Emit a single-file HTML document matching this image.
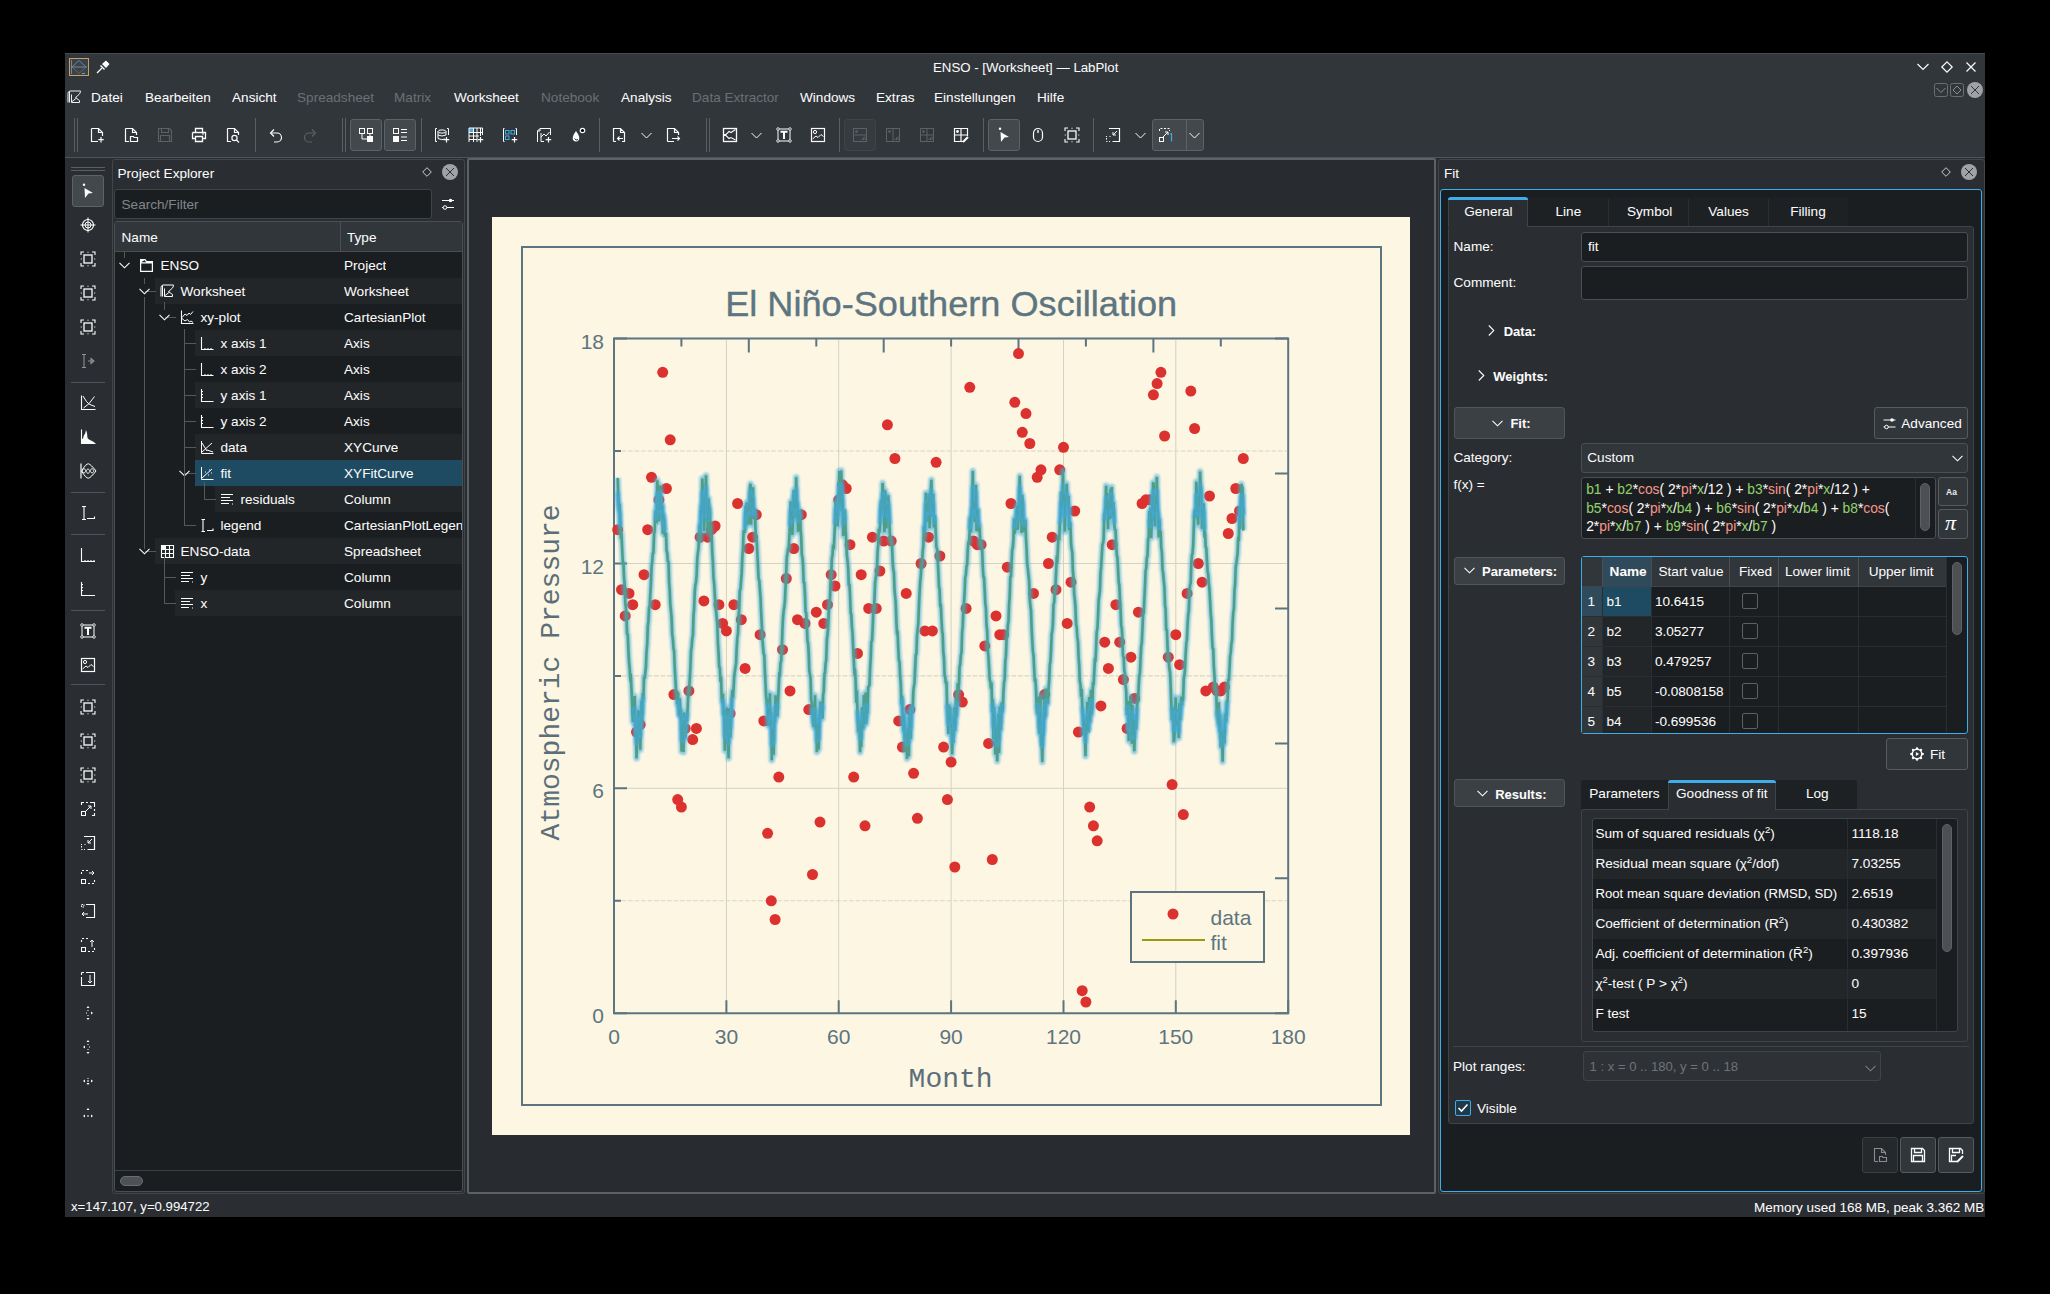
<!DOCTYPE html><html><head><meta charset="utf-8"><style>
html,body{margin:0;padding:0}
body{width:2050px;height:1294px;background:#000;overflow:hidden;position:relative;font-family:"Liberation Sans",sans-serif;color:#fcfcfc}
.a{position:absolute}
.t{position:absolute;white-space:nowrap;line-height:1;-webkit-text-stroke:0.04px currentColor}
svg.a{overflow:visible}
sup{font-size:9.5px;vertical-align:0;position:relative;top:-5px;line-height:0}
</style></head><body>
<div class="a" style="left:65px;top:53px;width:1920px;height:1164px;background:#2a2e32;border-radius:0px;"></div>
<div class="a" style="left:65px;top:53px;width:1920px;height:104px;background:#31363b;border-radius:0px;"></div>
<div class="a" style="left:65px;top:53px;width:1920px;height:1px;background:#464c52;border-radius:0px;"></div>
<div class="t" style="left:933.0px;top:60.8px;font-size:13.25px;color:#fcfcfc;font-weight:normal;font-family:'Liberation Sans',sans-serif;">ENSO - [Worksheet] — LabPlot</div>
<svg class="a" style="left:69px;top:58px;" width="20" height="18" viewBox="0 0 20 18"><rect x="0.5" y="0.5" width="19" height="17" fill="#3b4249" stroke="#c9a063" stroke-width="1"/><path d="M2.5 2 V16 M2 9 H18" stroke="#9aa0a6" stroke-width="0.7" fill="none"/><path d="M3 9 L10 2.5 L17 9" stroke="#5fa0c8" stroke-width="0.8" fill="none"/><path d="M3 9 L10 15.5 L17 9" stroke="#6d737a" stroke-width="0.7" fill="none"/><path d="M13 15.5 H16" stroke="#3daee9" stroke-width="1"/></svg>
<svg class="a" style="left:96px;top:60px;" width="14" height="14" viewBox="0 0 14 14"><path d="M1 13 L6 8" stroke="#fff" stroke-width="1.3"/><path d="M5 5 L9 9 L8 10 L4 6 Z M6 4 L10 0.5 L13.5 4 L10 8 Z" fill="#fff"/></svg>
<svg class="a" style="left:1917px;top:63px;" width="12" height="8" viewBox="0 0 12 8"><path d="M0.5 1 L6 6.5 L11.5 1" stroke="#fcfcfc" stroke-width="1.2" fill="none"/></svg>
<svg class="a" style="left:1941px;top:61px;" width="12" height="12" viewBox="0 0 12 12"><path d="M6 0.8 L11.2 6 L6 11.2 L0.8 6 Z" stroke="#fcfcfc" stroke-width="1.2" fill="none"/></svg>
<svg class="a" style="left:1966px;top:62px;" width="10" height="10" viewBox="0 0 10 10"><path d="M0.5 0.5 L9.5 9.5 M9.5 0.5 L0.5 9.5" stroke="#fcfcfc" stroke-width="1.2" fill="none"/></svg>
<svg class="a" style="left:1934px;top:83px;" width="14" height="14" viewBox="0 0 14 14"><rect x="0.5" y="0.5" width="13" height="13" rx="2" fill="none" stroke="#6a6f74"/><path d="M2.5 5 L7 9.5 L11.5 5" stroke="#8a8f94" fill="none"/></svg>
<svg class="a" style="left:1950px;top:83px;" width="14" height="14" viewBox="0 0 14 14"><rect x="0.5" y="0.5" width="13" height="13" rx="2" fill="none" stroke="#6a6f74"/><path d="M7 3 L11 7 L7 11 L3 7 Z" stroke="#8a8f94" fill="none"/></svg>
<svg class="a" style="left:1967px;top:82px;" width="16" height="16" viewBox="0 0 16 16"><circle cx="8" cy="8" r="8" fill="#a0a2a5"/><path d="M4 4 L12 12 M12 4 L4 12" stroke="#31363b" stroke-width="1"/></svg>
<div class="t" style="left:91.0px;top:90.5px;font-size:13.6px;color:#fcfcfc;font-weight:normal;font-family:'Liberation Sans',sans-serif;">Datei</div>
<div class="t" style="left:145.0px;top:90.5px;font-size:13.6px;color:#fcfcfc;font-weight:normal;font-family:'Liberation Sans',sans-serif;">Bearbeiten</div>
<div class="t" style="left:232.0px;top:90.5px;font-size:13.6px;color:#fcfcfc;font-weight:normal;font-family:'Liberation Sans',sans-serif;">Ansicht</div>
<div class="t" style="left:297.0px;top:90.5px;font-size:13.6px;color:#6b6f73;font-weight:normal;font-family:'Liberation Sans',sans-serif;">Spreadsheet</div>
<div class="t" style="left:394.0px;top:90.5px;font-size:13.6px;color:#6b6f73;font-weight:normal;font-family:'Liberation Sans',sans-serif;">Matrix</div>
<div class="t" style="left:454.0px;top:90.5px;font-size:13.6px;color:#fcfcfc;font-weight:normal;font-family:'Liberation Sans',sans-serif;">Worksheet</div>
<div class="t" style="left:541.0px;top:90.5px;font-size:13.6px;color:#6b6f73;font-weight:normal;font-family:'Liberation Sans',sans-serif;">Notebook</div>
<div class="t" style="left:621.0px;top:90.5px;font-size:13.6px;color:#fcfcfc;font-weight:normal;font-family:'Liberation Sans',sans-serif;">Analysis</div>
<div class="t" style="left:692.0px;top:90.5px;font-size:13.6px;color:#6b6f73;font-weight:normal;font-family:'Liberation Sans',sans-serif;">Data Extractor</div>
<div class="t" style="left:800.0px;top:90.5px;font-size:13.6px;color:#fcfcfc;font-weight:normal;font-family:'Liberation Sans',sans-serif;">Windows</div>
<div class="t" style="left:876.0px;top:90.5px;font-size:13.6px;color:#fcfcfc;font-weight:normal;font-family:'Liberation Sans',sans-serif;">Extras</div>
<div class="t" style="left:934.0px;top:90.5px;font-size:13.6px;color:#fcfcfc;font-weight:normal;font-family:'Liberation Sans',sans-serif;">Einstellungen</div>
<div class="t" style="left:1037.0px;top:90.5px;font-size:13.6px;color:#fcfcfc;font-weight:normal;font-family:'Liberation Sans',sans-serif;">Hilfe</div>
<svg class="a" style="left:67px;top:89px;" width="15" height="15" viewBox="0 0 15 15"><path d="M1 13.5 V4.5 Q1 2.5 3 2 H13.5 Q13.5 4 12 5.5 L8.5 8.5 L12.5 11.5 V13.5 H4.5 V5.5 M4.5 13 L9.5 9 M2.5 2.5 V13.5" fill="none" stroke="#eee" stroke-width="1"/></svg>
<div class="a" style="left:74px;top:118px;width:1px;height:34px;background:#5a5f64;border-radius:0px;"></div>
<div class="a" style="left:77px;top:118px;width:1px;height:34px;background:#5a5f64;border-radius:0px;"></div>
<svg class="a" style="left:89px;top:127px;" width="16" height="16" viewBox="0 0 16 16"><path d="M2.5 1.5 H9.5 L13.5 5.5 V9 M9.5 1.5 V5.5 H13.5 M2.5 1.5 V14.5 H9" fill="none" stroke="#fcfcfc" stroke-width="1.2"/><path d="M12 10 V15.5 M9.3 12.7 H14.7" stroke="#fcfcfc" stroke-width="1.2"/></svg>
<svg class="a" style="left:123px;top:127px;" width="16" height="16" viewBox="0 0 16 16"><path d="M2.5 1.5 H9.5 L13.5 5.5 V8 M9.5 1.5 V5.5 H13.5 M2.5 1.5 V14.5 H6" fill="none" stroke="#fcfcfc" stroke-width="1.2"/><path d="M7.5 9.5 H10.5 L11 10.5 H14.5 V14.5 H7.5 Z" fill="none" stroke="#fcfcfc" stroke-width="1.2"/></svg>
<svg class="a" style="left:157px;top:127px;" width="16" height="16" viewBox="0 0 16 16"><path d="M1.5 1.5 H12.5 L14.5 3.5 V14.5 H1.5 Z M4.5 1.5 V5.5 H11.5 V1.5 M3.5 14.5 V8.5 H12.5 V14.5" fill="none" stroke="#5d6166" stroke-width="1.1"/></svg>
<svg class="a" style="left:191px;top:127px;" width="16" height="16" viewBox="0 0 16 16"><path d="M4.5 5 V1.5 H11.5 V5 M1.5 5.5 H14.5 V11.5 H11.5 M4.5 11.5 H1.5 V5.5 M4.5 9.5 H11.5 V14.5 H4.5 Z" fill="none" stroke="#fcfcfc" stroke-width="1.3"/><path d="M11 7 H13" stroke="#fcfcfc"/></svg>
<svg class="a" style="left:225px;top:127px;" width="16" height="16" viewBox="0 0 16 16"><path d="M2.5 1.5 H9.5 L13.5 5.5 V8 M9.5 1.5 V5.5 H13.5 M2.5 1.5 V14.5 H6" fill="none" stroke="#fcfcfc" stroke-width="1.2"/><circle cx="9.5" cy="11" r="2.6" fill="none" stroke="#fcfcfc" stroke-width="1.2"/><path d="M11.5 13 L14 15.5" stroke="#fcfcfc" stroke-width="1.3"/></svg>
<div class="a" style="left:255px;top:118px;width:1px;height:34px;background:#5a5f64;border-radius:0px;"></div>
<svg class="a" style="left:268px;top:127px;" width="16" height="16" viewBox="0 0 16 16"><path d="M3 6 H9 A4.5 4.5 0 0 1 9 15 H6" fill="none" stroke="#fcfcfc" stroke-width="1.2"/><path d="M6 2.5 L2.5 6 L6 9.5" fill="none" stroke="#fcfcfc" stroke-width="1.2"/></svg>
<svg class="a" style="left:302px;top:127px;" width="16" height="16" viewBox="0 0 16 16"><path d="M13 6 H7 A4.5 4.5 0 0 0 7 15 H10" fill="none" stroke="#5d6166" stroke-width="1.2"/><path d="M10 2.5 L13.5 6 L10 9.5" fill="none" stroke="#5d6166" stroke-width="1.2"/></svg>
<div class="a" style="left:342px;top:118px;width:1px;height:34px;background:#5a5f64;border-radius:0px;"></div>
<div class="a" style="left:345px;top:118px;width:1px;height:34px;background:#5a5f64;border-radius:0px;"></div>
<div class="a" style="left:350px;top:119px;width:32px;height:32px;background:#43484d;border:1px solid #5d6267;box-sizing:border-box;border-radius:3px;"></div>
<div class="a" style="left:384px;top:119px;width:32px;height:32px;background:#43484d;border:1px solid #5d6267;box-sizing:border-box;border-radius:3px;"></div>
<svg class="a" style="left:358px;top:127px;" width="16" height="16" viewBox="0 0 16 16"><rect x="1.5" y="1.5" width="5" height="5" fill="none" stroke="#fcfcfc"/><rect x="9.5" y="1.5" width="5" height="5" fill="none" stroke="#fcfcfc"/><rect x="9" y="9" width="6" height="6" fill="#fcfcfc"/><path d="M4 6.5 V12 H9 M12 6.5 V9" fill="none" stroke="#fcfcfc"/></svg>
<svg class="a" style="left:392px;top:127px;" width="16" height="16" viewBox="0 0 16 16"><rect x="1.5" y="1.5" width="5" height="5" fill="none" stroke="#fcfcfc"/><rect x="1" y="9" width="6" height="6" fill="#fcfcfc"/><path d="M9 2.5 H15 M9 5.5 H15 M9 10 H15 M9 13.5 H15" stroke="#fcfcfc"/></svg>
<div class="a" style="left:421px;top:118px;width:1px;height:34px;background:#5a5f64;border-radius:0px;"></div>
<svg class="a" style="left:434px;top:127px;" width="16" height="16" viewBox="0 0 16 16"><path d="M3 1.5 H1.5 V14.5 H3 M13 1.5 H14.5 V8" fill="none" stroke="#fcfcfc"/><ellipse cx="8" cy="4.5" rx="4" ry="1.6" fill="none" stroke="#fcfcfc"/><path d="M4 4.5 V11.5 Q8 13.5 11 12 M12 4.5 V8 M4 8 Q8 10 12 8" fill="none" stroke="#fcfcfc"/><path d="M12.5 10 V15.5 M9.7 12.7 H15.2" stroke="#fcfcfc" stroke-width="1.2"/></svg>
<svg class="a" style="left:468px;top:127px;" width="16" height="16" viewBox="0 0 16 16"><rect x="1" y="1" width="4" height="4" fill="#3daee9"/><path d="M1 5.5 H14.5 M1 9 H11 M1 12.5 H9 M5.5 1 V15 M9 1 V15 M12.5 1 V9 M1 1 H14.5 V8 M1 1 V15" fill="none" stroke="#fcfcfc"/><path d="M12.5 10 V15.5 M9.7 12.7 H15.2" stroke="#fcfcfc" stroke-width="1.2"/></svg>
<svg class="a" style="left:502px;top:127px;" width="16" height="16" viewBox="0 0 16 16"><path d="M2.5 1.5 H1.5 V14.5 H2.5 M13.5 1.5 H14.5 V8" fill="none" stroke="#fcfcfc"/><rect x="3.5" y="3.5" width="3.5" height="3.5" fill="none" stroke="#3daee9"/><rect x="9" y="3.5" width="3.5" height="3.5" fill="none" stroke="#3daee9"/><rect x="3.5" y="9" width="3.5" height="3.5" fill="none" stroke="#3daee9"/><path d="M12.5 10 V15.5 M9.7 12.7 H15.2" stroke="#fcfcfc" stroke-width="1.2"/></svg>
<svg class="a" style="left:536px;top:127px;" width="16" height="16" viewBox="0 0 16 16"><path d="M1.5 15 V4 L4 1.5 H14.5 V8 M4 1.5 V4 H1.5" fill="none" stroke="#fcfcfc"/><path d="M5 6 V14.5 H8 M5 10 L8 7 L10 9 L13.5 5" fill="none" stroke="#fcfcfc"/><path d="M12.5 10 V15.5 M9.7 12.7 H15.2" stroke="#fcfcfc" stroke-width="1.2"/></svg>
<svg class="a" style="left:570px;top:127px;" width="16" height="16" viewBox="0 0 16 16"><path d="M6 4 Q1.5 10 3 13 Q6 16 9 13 Q10.5 10 6 4 Z" fill="#fcfcfc"/><path d="M4.5 11.5 Q6 14 8 12.5" stroke="#31363b" fill="none"/><circle cx="12.5" cy="3.5" r="2.8" fill="#fcfcfc"/><circle cx="12.5" cy="3.5" r="1.6" fill="#000"/></svg>
<div class="a" style="left:599px;top:118px;width:1px;height:34px;background:#5a5f64;border-radius:0px;"></div>
<svg class="a" style="left:611px;top:127px;" width="16" height="16" viewBox="0 0 16 16"><path d="M2.5 14.5 V1.5 H9.5 L13.5 5.5 V14.5 H11 M9.5 1.5 V5.5 H13.5 M2.5 14.5 H5" fill="none" stroke="#fcfcfc" stroke-width="1.2"/><path d="M12 11.5 H6.5 M8.5 9.5 L6.5 11.5 L8.5 13.5" fill="none" stroke="#fcfcfc" stroke-width="1.1"/></svg>
<svg class="a" style="left:641px;top:132px;" width="11" height="7" viewBox="0 0 11 7"><path d="M0.5 1 L5.5 6 L10.5 1" stroke="#fcfcfc" fill="none"/></svg>
<svg class="a" style="left:665px;top:127px;" width="16" height="16" viewBox="0 0 16 16"><path d="M2.5 14.5 V1.5 H9.5 L13.5 5.5 V8 M9.5 1.5 V5.5 H13.5 M2.5 14.5 H9" fill="none" stroke="#fcfcfc" stroke-width="1.2"/><path d="M7 11.5 H14.5 M12.5 9.5 L14.5 11.5 L12.5 13.5" fill="none" stroke="#fcfcfc" stroke-width="1.1"/></svg>
<div class="a" style="left:706px;top:118px;width:1px;height:34px;background:#5a5f64;border-radius:0px;"></div>
<div class="a" style="left:709px;top:118px;width:1px;height:34px;background:#5a5f64;border-radius:0px;"></div>
<svg class="a" style="left:722px;top:127px;" width="16" height="16" viewBox="0 0 16 16"><rect x="1.5" y="1.5" width="13" height="13" fill="none" stroke="#fcfcfc" stroke-width="1.3"/><path d="M1.5 7.5 H4 L7 4.5 L9 5.5 L13.5 2.5 M1.5 8.5 H4 L7 11.5 L9 10.5 L13.5 13" fill="none" stroke="#fcfcfc" stroke-width="1.1"/></svg>
<svg class="a" style="left:751px;top:132px;" width="11" height="7" viewBox="0 0 11 7"><path d="M0.5 1 L5.5 6 L10.5 1" stroke="#fcfcfc" fill="none"/></svg>
<svg class="a" style="left:776px;top:127px;" width="16" height="16" viewBox="0 0 16 16"><rect x="2" y="2" width="12" height="12" fill="none" stroke="#fcfcfc"/><circle cx="2" cy="2" r="1.3" fill="#31363b" stroke="#fcfcfc" stroke-width="0.8"/><circle cx="14" cy="2" r="1.3" fill="#31363b" stroke="#fcfcfc" stroke-width="0.8"/><circle cx="2" cy="14" r="1.3" fill="#31363b" stroke="#fcfcfc" stroke-width="0.8"/><circle cx="14" cy="14" r="1.3" fill="#31363b" stroke="#fcfcfc" stroke-width="0.8"/><path d="M4.5 4.8 H11.5 M8 4.8 V12" stroke="#fcfcfc" stroke-width="2"/></svg>
<svg class="a" style="left:810px;top:127px;" width="16" height="16" viewBox="0 0 16 16"><rect x="1.5" y="1.5" width="13" height="13" fill="none" stroke="#fcfcfc" stroke-width="1.2"/><circle cx="5" cy="5" r="1.6" fill="none" stroke="#fcfcfc"/><path d="M2.5 12 L6 9 L8 10.5 L11 7.5 L13.5 9.5" fill="none" stroke="#fcfcfc"/></svg>
<div class="a" style="left:839px;top:118px;width:1px;height:34px;background:#5a5f64;border-radius:0px;"></div>
<div class="a" style="left:844px;top:119px;width:32px;height:32px;background:#363b40;border:1px solid #3e4348;box-sizing:border-box;border-radius:3px;"></div>
<svg class="a" style="left:852px;top:127px;" width="16" height="16" viewBox="0 0 16 16"><rect x="1.5" y="1.5" width="13" height="13" fill="none" stroke="#5d6166"/><path d="M1.5 8 H14.5" stroke="#5d6166"/><circle cx="4.5" cy="4.5" r="1.3" fill="#5d6166"/><path d="M10 13 V11.5 M11.5 13 V10.5 M13 13 V9.5" stroke="#5d6166"/></svg>
<svg class="a" style="left:885px;top:127px;" width="16" height="16" viewBox="0 0 16 16"><rect x="1.5" y="1.5" width="13" height="13" fill="none" stroke="#5d6166"/><path d="M8 1.5 V14.5" stroke="#5d6166"/><circle cx="4.5" cy="4.5" r="1.3" fill="#5d6166"/><path d="M10 13 V11.5 M11.5 13 V10.5 M13 13 V9.5" stroke="#5d6166"/></svg>
<svg class="a" style="left:919px;top:127px;" width="16" height="16" viewBox="0 0 16 16"><rect x="1.5" y="1.5" width="13" height="13" fill="none" stroke="#5d6166"/><path d="M8 1.5 V14.5 M1.5 8 H14.5" stroke="#5d6166"/><circle cx="4.5" cy="4.5" r="1.3" fill="#5d6166"/><path d="M10 13 V11.5 M11.5 13 V10.5 M13 13 V9.5" stroke="#5d6166"/></svg>
<svg class="a" style="left:953px;top:127px;" width="16" height="16" viewBox="0 0 16 16"><path d="M10 14.5 H1.5 V1.5 H14.5 V9 M8 1.5 V14.5 M1.5 8 H14.5" fill="none" stroke="#fcfcfc" stroke-width="1.2"/><circle cx="4.5" cy="4.5" r="1.4" fill="#fcfcfc"/><path d="M10 15 L15 10" stroke="#fcfcfc" stroke-width="2.2"/></svg>
<div class="a" style="left:983px;top:118px;width:1px;height:34px;background:#5a5f64;border-radius:0px;"></div>
<div class="a" style="left:988px;top:119px;width:32px;height:32px;background:#43484d;border:1px solid #5d6267;box-sizing:border-box;border-radius:3px;"></div>
<svg class="a" style="left:996px;top:127px;" width="16" height="16" viewBox="0 0 16 16"><circle cx="4" cy="1.8" r="1.2" fill="#fcfcfc"/><path d="M4.5 5 L13 10 L8.5 10.5 L5 15 Z" fill="#fcfcfc"/></svg>
<svg class="a" style="left:1030px;top:127px;" width="16" height="16" viewBox="0 0 16 16"><rect x="3.5" y="1.5" width="9" height="13" rx="4.5" fill="none" stroke="#fcfcfc" stroke-width="1.2"/><path d="M8 3 V6" stroke="#fcfcfc" stroke-width="1.4"/></svg>
<svg class="a" style="left:1064px;top:127px;" width="16" height="16" viewBox="0 0 16 16"><rect x="4" y="4" width="8" height="8" fill="none" stroke="#fcfcfc" stroke-width="1.3"/><path d="M1 4 V1 H4 M12 1 H15 V4 M15 12 V15 H12 M4 15 H1 V12" fill="none" stroke="#fcfcfc" stroke-width="1.1"/><path d="M8 0.5 L7 1.5 H9 Z M8 15.5 L7 14.5 H9 Z M0.5 8 L1.5 7 V9 Z M15.5 8 L14.5 7 V9 Z" fill="#fcfcfc"/></svg>
<div class="a" style="left:1093px;top:118px;width:1px;height:34px;background:#5a5f64;border-radius:0px;"></div>
<svg class="a" style="left:1105px;top:127px;" width="16" height="16" viewBox="0 0 16 16"><path d="M4 1.5 H14.5 V14.5 H7.5" fill="none" stroke="#fcfcfc" stroke-width="1.2"/><path d="M1.5 11 V14.5 H5 M1.5 9 V10 M5 9 V10" fill="none" stroke="#fcfcfc" stroke-dasharray="1.5 1.5"/><path d="M12 4 L8 8 M8 5 V8 H11" fill="none" stroke="#fcfcfc"/></svg>
<svg class="a" style="left:1135px;top:132px;" width="11" height="7" viewBox="0 0 11 7"><path d="M0.5 1 L5.5 6 L10.5 1" stroke="#fcfcfc" fill="none"/></svg>
<div class="a" style="left:1152px;top:119px;width:52px;height:32px;background:#43484d;border:1px solid #5d6267;box-sizing:border-box;border-radius:3px;"></div>
<div class="a" style="left:1186px;top:120px;width:1px;height:30px;background:#5d6267;border-radius:0px;"></div>
<svg class="a" style="left:1158px;top:127px;" width="16" height="16" viewBox="0 0 16 16"><path d="M1.5 4 V1.5 H11.5 V4" fill="none" stroke="#fcfcfc" stroke-dasharray="2 1.5"/><rect x="1.5" y="10.5" width="4" height="4" fill="none" stroke="#fcfcfc"/><path d="M5 10 L10 5 M7 5 H10 V8" fill="none" stroke="#fcfcfc"/><path d="M13.5 6 V14.5" stroke="#3daee9" stroke-width="1.2"/><path d="M12 7.5 L13.5 6" stroke="#3daee9"/></svg>
<svg class="a" style="left:1189px;top:132px;" width="11" height="7" viewBox="0 0 11 7"><path d="M0.5 1 L5.5 6 L10.5 1" stroke="#fcfcfc" fill="none"/></svg>
<div class="a" style="left:65px;top:157px;width:1920px;height:1px;background:#4e5459;border-radius:0px;"></div>
<div class="a" style="left:71px;top:167px;width:34px;height:1px;background:#5a5f64;border-radius:0px;"></div>
<div class="a" style="left:71px;top:170px;width:34px;height:1px;background:#5a5f64;border-radius:0px;"></div>
<div class="a" style="left:72px;top:175px;width:32px;height:32px;background:#43484d;border:1px solid #5d6267;box-sizing:border-box;border-radius:3px;"></div>
<svg class="a" style="left:80px;top:183px;" width="16" height="16" viewBox="0 0 16 16"><circle cx="4" cy="1.8" r="1.2" fill="#fcfcfc"/><path d="M4.5 5 L13 10 L8.5 10.5 L5 15 Z" fill="#fcfcfc"/></svg>
<svg class="a" style="left:80px;top:217px;" width="16" height="16" viewBox="0 0 16 16"><circle cx="8" cy="8" r="5.5" fill="none" stroke="#fcfcfc" stroke-width="1.2"/><circle cx="8" cy="8" r="3" fill="none" stroke="#fcfcfc"/><path d="M8 0.5 V15.5 M0.5 8 H15.5" stroke="#fcfcfc"/></svg>
<svg class="a" style="left:80px;top:251px;" width="16" height="16" viewBox="0 0 16 16"><rect x="4" y="4" width="8" height="8" fill="none" stroke="#fcfcfc" stroke-width="1.3"/><path d="M1 4 V1 H4 M12 1 H15 V4 M15 12 V15 H12 M4 15 H1 V12" fill="none" stroke="#fcfcfc" stroke-width="1.1"/><path d="M8 0.5 L7 1.5 H9 Z M8 15.5 L7 14.5 H9 Z M0.5 8 L1.5 7 V9 Z M15.5 8 L14.5 7 V9 Z" fill="#fcfcfc"/></svg>
<svg class="a" style="left:80px;top:285px;" width="16" height="16" viewBox="0 0 16 16"><rect x="4" y="4" width="8" height="8" fill="none" stroke="#fcfcfc" stroke-width="1.3"/><path d="M1 4 V1 H4 M12 1 H15 V4 M15 12 V15 H12 M4 15 H1 V12" fill="none" stroke="#fcfcfc" stroke-width="1.1"/><path d="M8 0.5 L7 1.5 H9 Z M8 15.5 L7 14.5 H9 Z M0.5 8 L1.5 7 V9 Z M15.5 8 L14.5 7 V9 Z" fill="#fcfcfc"/></svg>
<svg class="a" style="left:80px;top:319px;" width="16" height="16" viewBox="0 0 16 16"><rect x="4" y="4" width="8" height="8" fill="none" stroke="#fcfcfc" stroke-width="1.3"/><path d="M1 4 V1 H4 M12 1 H15 V4 M15 12 V15 H12 M4 15 H1 V12" fill="none" stroke="#fcfcfc" stroke-width="1.1"/><path d="M8 0.5 L7 1.5 H9 Z M8 15.5 L7 14.5 H9 Z M0.5 8 L1.5 7 V9 Z M15.5 8 L14.5 7 V9 Z" fill="#fcfcfc"/></svg>
<svg class="a" style="left:80px;top:353px;" width="16" height="16" viewBox="0 0 16 16"><path d="M2 1.5 H6 M4 1.5 V14.5 M2 14.5 H6 M8 8 H13 M11 5.5 L14 8 L11 10.5 Z" fill="none" stroke="#8d9196" stroke-width="1.1"/></svg>
<div class="a" style="left:71px;top:382px;width:34px;height:1px;background:#4e5459;border-radius:0px;"></div>
<svg class="a" style="left:80px;top:395px;" width="16" height="16" viewBox="0 0 16 16"><path d="M1.5 0.5 V14.5 H15.5" fill="none" stroke="#fcfcfc" stroke-width="1.1"/><path d="M3 1 Q7 8 9 9 Q12 10.5 15 11.5 M3.5 13 Q9 10 14.5 1.5" fill="none" stroke="#fcfcfc" stroke-width="1"/></svg>
<svg class="a" style="left:80px;top:429px;" width="16" height="16" viewBox="0 0 16 16"><path d="M1.5 0.5 V14.5 H15.5" fill="none" stroke="#fcfcfc" stroke-width="1.1"/><path d="M2 14 V10 L3 9.5 L4 6 L5 5 L6 1 L7 4 L7.5 9 L9 10.5 L11 11.5 L13 12.5 L15 14 Z" fill="#fcfcfc"/></svg>
<svg class="a" style="left:80px;top:463px;" width="16" height="16" viewBox="0 0 16 16"><path d="M1 0.5 V15.5" stroke="#fcfcfc" stroke-width="1.2"/><path d="M1.5 8 Q6 0.5 8.5 0.8 Q11 1.5 16 8 Q11 14.5 8.5 15.2 Q6 15.5 1.5 8 Z" fill="none" stroke="#fcfcfc" stroke-width="1"/><path d="M2 8 Q4 3 6 8 Q8 13 10 8 Q12 3 14 8" fill="none" stroke="#fcfcfc" stroke-width="0.8"/><path d="M2 8 Q4 12 6 8 Q8 4 10 8 Q12 12 14 8" fill="none" stroke="#fcfcfc" stroke-width="0.8"/></svg>
<div class="a" style="left:71px;top:492px;width:34px;height:1px;background:#4e5459;border-radius:0px;"></div>
<svg class="a" style="left:80px;top:505px;" width="16" height="16" viewBox="0 0 16 16"><path d="M2 1.5 H6 M4 1.5 V14.5 M2 14.5 H6 M7 13.5 H14.5 V11.5" fill="none" stroke="#fcfcfc" stroke-width="1.1"/></svg>
<div class="a" style="left:71px;top:534px;width:34px;height:1px;background:#4e5459;border-radius:0px;"></div>
<svg class="a" style="left:80px;top:547px;" width="16" height="16" viewBox="0 0 16 16"><path d="M1.5 1 V14.5 H15 M5 13 V14 M8 13 V14 M11 13 V14 M14 13 V14" fill="none" stroke="#fcfcfc" stroke-width="1.1"/></svg>
<svg class="a" style="left:80px;top:581px;" width="16" height="16" viewBox="0 0 16 16"><path d="M1.5 1 V14.5 H15 M2 3.5 H3 M2 6.5 H3 M2 9.5 H3" fill="none" stroke="#fcfcfc" stroke-width="1.1"/></svg>
<div class="a" style="left:71px;top:610px;width:34px;height:1px;background:#4e5459;border-radius:0px;"></div>
<svg class="a" style="left:80px;top:623px;" width="16" height="16" viewBox="0 0 16 16"><rect x="2" y="2" width="12" height="12" fill="none" stroke="#fcfcfc"/><circle cx="2" cy="2" r="1.3" fill="#2a2e32" stroke="#fcfcfc" stroke-width="0.8"/><circle cx="14" cy="2" r="1.3" fill="#2a2e32" stroke="#fcfcfc" stroke-width="0.8"/><circle cx="2" cy="14" r="1.3" fill="#2a2e32" stroke="#fcfcfc" stroke-width="0.8"/><circle cx="14" cy="14" r="1.3" fill="#2a2e32" stroke="#fcfcfc" stroke-width="0.8"/><path d="M4.5 4.8 H11.5 M8 4.8 V12" stroke="#fcfcfc" stroke-width="2"/></svg>
<svg class="a" style="left:80px;top:657px;" width="16" height="16" viewBox="0 0 16 16"><rect x="1.5" y="1.5" width="13" height="13" fill="none" stroke="#fcfcfc" stroke-width="1.2"/><circle cx="5" cy="5" r="1.6" fill="none" stroke="#fcfcfc"/><path d="M2.5 12 L6 9 L8 10.5 L11 7.5 L13.5 9.5" fill="none" stroke="#fcfcfc"/></svg>
<div class="a" style="left:71px;top:684px;width:34px;height:1px;background:#4e5459;border-radius:0px;"></div>
<svg class="a" style="left:80px;top:699px;" width="16" height="16" viewBox="0 0 16 16"><rect x="4" y="4" width="8" height="8" fill="none" stroke="#fcfcfc" stroke-width="1.3"/><path d="M1 4 V1 H4 M12 1 H15 V4 M15 12 V15 H12 M4 15 H1 V12" fill="none" stroke="#fcfcfc" stroke-width="1.1"/><path d="M8 0.5 L7 1.5 H9 Z M8 15.5 L7 14.5 H9 Z M0.5 8 L1.5 7 V9 Z M15.5 8 L14.5 7 V9 Z" fill="#fcfcfc"/></svg>
<svg class="a" style="left:80px;top:733px;" width="16" height="16" viewBox="0 0 16 16"><rect x="4" y="4" width="8" height="8" fill="none" stroke="#fcfcfc" stroke-width="1.3"/><path d="M1 4 V1 H4 M12 1 H15 V4 M15 12 V15 H12 M4 15 H1 V12" fill="none" stroke="#fcfcfc" stroke-width="1.1"/><path d="M8 0.5 L7 1.5 H9 Z M8 15.5 L7 14.5 H9 Z M0.5 8 L1.5 7 V9 Z M15.5 8 L14.5 7 V9 Z" fill="#fcfcfc"/></svg>
<svg class="a" style="left:80px;top:767px;" width="16" height="16" viewBox="0 0 16 16"><rect x="4" y="4" width="8" height="8" fill="none" stroke="#fcfcfc" stroke-width="1.3"/><path d="M1 4 V1 H4 M12 1 H15 V4 M15 12 V15 H12 M4 15 H1 V12" fill="none" stroke="#fcfcfc" stroke-width="1.1"/><path d="M8 0.5 L7 1.5 H9 Z M8 15.5 L7 14.5 H9 Z M0.5 8 L1.5 7 V9 Z M15.5 8 L14.5 7 V9 Z" fill="#fcfcfc"/></svg>
<svg class="a" style="left:80px;top:801px;" width="16" height="16" viewBox="0 0 16 16"><path d="M1.5 4 V1.5 H4 M6 1.5 H8 M10 1.5 H14.5 V6 M14.5 8 V10 M14.5 12 V14.5 H12 M6 14.5 H1.5 V11" fill="none" stroke="#fcfcfc" stroke-width="1.1"/><rect x="1.5" y="10.5" width="4" height="4" fill="none" stroke="#fcfcfc"/><path d="M6 10 L11 5 M8 5 H11 V8" fill="none" stroke="#fcfcfc"/></svg>
<svg class="a" style="left:80px;top:835px;" width="16" height="16" viewBox="0 0 16 16"><path d="M4 1.5 H14.5 V14.5 H7.5" fill="none" stroke="#fcfcfc" stroke-width="1.2"/><path d="M1.5 11 V14.5 H5 M1.5 9 V10 M5 9 V10" fill="none" stroke="#fcfcfc" stroke-dasharray="1.5 1.5"/><path d="M12 4 L8 8 M8 5 V8 H11" fill="none" stroke="#fcfcfc"/></svg>
<svg class="a" style="left:80px;top:869px;" width="16" height="16" viewBox="0 0 16 16"><path d="M1.5 5 V1.5 H4 M6 1.5 H8 M14.5 11 V14.5 H12 M10 14.5 H8 M6 14.5 H1.5 V11" fill="none" stroke="#fcfcfc" stroke-width="1.1" stroke-dasharray="2 2"/><rect x="1.5" y="10.5" width="4" height="4" fill="none" stroke="#fcfcfc"/><path d="M9 4 H14 M12 2 L14 4 L12 6" fill="none" stroke="#fcfcfc"/></svg>
<svg class="a" style="left:80px;top:903px;" width="16" height="16" viewBox="0 0 16 16"><path d="M6 1.5 H14.5 V14.5 H6" fill="none" stroke="#fcfcfc" stroke-width="1.1"/><path d="M1.5 1.5 H4 V4 H1.5 Z" fill="none" stroke="#fcfcfc" stroke-dasharray="1.5 1"/><path d="M8 11 H2 M4 9 L2 11 L4 13" fill="none" stroke="#fcfcfc"/></svg>
<svg class="a" style="left:80px;top:937px;" width="16" height="16" viewBox="0 0 16 16"><path d="M1.5 5 V1.5 H4 M6 1.5 H8 M14.5 11 V14.5 H12 M10 14.5 H8 M6 14.5 H1.5 V11" fill="none" stroke="#fcfcfc" stroke-width="1.1" stroke-dasharray="2 2"/><rect x="1.5" y="10.5" width="4" height="4" fill="none" stroke="#fcfcfc"/><path d="M12 10 V3 M10 5 L12 3 L14 5" fill="none" stroke="#fcfcfc"/></svg>
<svg class="a" style="left:80px;top:971px;" width="16" height="16" viewBox="0 0 16 16"><path d="M1.5 1.5 H4 M1.5 4 V1.5 M6 1.5 H14.5 V14.5 H1.5 V6" fill="none" stroke="#fcfcfc" stroke-width="1.1"/><path d="M10 4 V12 M8 10 L10 12 L12 10" fill="none" stroke="#fcfcfc"/></svg>
<svg class="a" style="left:80px;top:1005px;" width="16" height="16" viewBox="0 0 16 16"><path d="M8 1 L6.5 3 H9.5 Z M8 15 L6.5 13 H9.5 Z M13 8 L11 6.5 V9.5 Z" fill="#fcfcfc"/><path d="M8 5 V6 M8 10 V11 M6 8 H7" stroke="#fcfcfc"/></svg>
<svg class="a" style="left:80px;top:1039px;" width="16" height="16" viewBox="0 0 16 16"><path d="M8 1 L6.5 3 H9.5 Z M8 15 L6.5 13 H9.5 Z M3 8 L5 6.5 V9.5 Z" fill="#fcfcfc"/><path d="M8 5 V6 M8 10 V11 M9 8 H10" stroke="#fcfcfc"/></svg>
<svg class="a" style="left:80px;top:1073px;" width="16" height="16" viewBox="0 0 16 16"><path d="M8 12 L6.5 10 H9.5 Z M3 8 L5 6.5 V9.5 Z M13 8 L11 6.5 V9.5 Z" fill="#fcfcfc"/><path d="M7 8 H9 M8 5 V6" stroke="#fcfcfc"/></svg>
<svg class="a" style="left:80px;top:1105px;" width="16" height="16" viewBox="0 0 16 16"><path d="M8 3 L6.5 5 H9.5 Z M3 11 L5 9.5 V12.5 Z M13 11 L11 9.5 V12.5 Z" fill="#fcfcfc"/><path d="M7 11 H9" stroke="#fcfcfc"/></svg>
<div class="a" style="left:112px;top:159px;width:353px;height:1035px;background:none;border:1px solid #41464b;box-sizing:border-box;border-radius:3px;"></div>
<div class="t" style="left:117.5px;top:166.5px;font-size:13.6px;color:#fcfcfc;font-weight:normal;font-family:'Liberation Sans',sans-serif;">Project Explorer</div>
<svg class="a" style="left:422px;top:167px;" width="10" height="10" viewBox="0 0 10 10"><path d="M5 0.7 L9.3 5 L5 9.3 L0.7 5 Z" fill="none" stroke="#cfd0d1" stroke-width="1"/></svg>
<svg class="a" style="left:442px;top:164px;" width="16" height="16" viewBox="0 0 16 16"><circle cx="8" cy="8" r="8" fill="#a0a2a5"/><path d="M4 4 L12 12 M12 4 L4 12" stroke="#2a2e32" stroke-width="1"/></svg>
<div class="a" style="left:114px;top:189px;width:318px;height:30px;background:#1b1e20;border:1px solid #3f4448;box-sizing:border-box;border-radius:3px;"></div>
<div class="t" style="left:121.5px;top:197.5px;font-size:13.6px;color:#80858a;font-weight:normal;font-family:'Liberation Sans',sans-serif;">Search/Filter</div>
<svg class="a" style="left:441px;top:197px;" width="14" height="13" viewBox="0 0 14 13"><path d="M1 3.5 H13 M1 10.5 H13" stroke="#fcfcfc" stroke-width="1.2"/><circle cx="9.5" cy="3.5" r="1.8" fill="#fcfcfc"/><circle cx="4" cy="10.5" r="1.8" fill="#2a2e32" stroke="#fcfcfc"/></svg>
<div class="a" style="left:114px;top:221px;width:349px;height:971px;background:#1b1e20;border:1px solid #4a4f54;box-sizing:border-box;border-radius:3px;"></div>
<div class="a" style="left:115px;top:222px;width:347px;height:29px;background:#31363b;border-radius:0px;"></div>
<div class="a" style="left:115px;top:251px;width:347px;height:1px;background:#4a4f54;border-radius:0px;"></div>
<div class="a" style="left:340px;top:222px;width:1px;height:29px;background:#4a4f54;border-radius:0px;"></div>
<div class="t" style="left:121.5px;top:230.5px;font-size:13.6px;color:#fcfcfc;font-weight:normal;font-family:'Liberation Sans',sans-serif;">Name</div>
<div class="t" style="left:347.0px;top:230.5px;font-size:13.6px;color:#fcfcfc;font-weight:normal;font-family:'Liberation Sans',sans-serif;">Type</div>
<svg class="a" style="left:140px;top:258px;" width="15" height="15" viewBox="0 0 15 15"><path d="M0.6 1.6 V13.4 H12.4 V3.6 H6.5 L5 1.6 Z M0.6 4.8 H12.4" fill="none" stroke="#fcfcfc" stroke-width="1.2"/><path d="M1 2 L4.5 2 L1 4.5 Z" fill="#fcfcfc"/></svg>
<div class="t" style="left:160.5px;top:259.0px;font-size:13.6px;color:#fcfcfc;font-weight:normal;font-family:'Liberation Sans',sans-serif;">ENSO</div>
<div class="t" style="left:344.0px;top:259.0px;font-size:13.6px;color:#fcfcfc;font-weight:normal;font-family:'Liberation Sans',sans-serif;max-width:118px;overflow:hidden;">Project</div>
<svg class="a" style="left:119px;top:262px;" width="11" height="7" viewBox="0 0 11 7"><path d="M0.5 0.8 L5.5 5.8 L10.5 0.8" stroke="#fcfcfc" fill="none" stroke-width="1.1"/></svg>
<div class="a" style="left:155px;top:278px;width:307px;height:26px;background:#232629;border-radius:0px;"></div>
<svg class="a" style="left:160px;top:284px;" width="15" height="15" viewBox="0 0 15 15"><path d="M1 12.5 V3.5 Q1 1.5 3 1 H13.5 Q13.5 3 12 4.5 L8.5 7.5 L12.5 10.5 V12.5 H4.5 V4.5 M4.5 12 L9.5 8 M2.5 1.5 V12.5" fill="none" stroke="#fcfcfc" stroke-width="1"/></svg>
<div class="t" style="left:180.5px;top:285.0px;font-size:13.6px;color:#fcfcfc;font-weight:normal;font-family:'Liberation Sans',sans-serif;">Worksheet</div>
<div class="t" style="left:344.0px;top:285.0px;font-size:13.6px;color:#fcfcfc;font-weight:normal;font-family:'Liberation Sans',sans-serif;max-width:118px;overflow:hidden;">Worksheet</div>
<div class="a" style="left:144.5px;top:291px;width:11.5px;height:1px;background:#55595e;border-radius:0px;"></div>
<svg class="a" style="left:139px;top:288px;" width="11" height="7" viewBox="0 0 11 7"><path d="M0.5 0.8 L5.5 5.8 L10.5 0.8" stroke="#fcfcfc" fill="none" stroke-width="1.1"/></svg>
<svg class="a" style="left:180px;top:310px;" width="15" height="15" viewBox="0 0 15 15"><path d="M1.5 0.5 V13.5 H13.5" fill="none" stroke="#fcfcfc" stroke-width="1.1"/><path d="M2 7.5 L5 4 L7 5.5 L9 3 L10.5 4.5 L13 1.5 M2 8.5 L5 11 L7.5 9.5 L9.5 12 L11 11 L13 12.5" fill="none" stroke="#fcfcfc" stroke-width="1"/></svg>
<div class="t" style="left:200.5px;top:311.0px;font-size:13.6px;color:#fcfcfc;font-weight:normal;font-family:'Liberation Sans',sans-serif;">xy-plot</div>
<div class="t" style="left:344.0px;top:311.0px;font-size:13.6px;color:#fcfcfc;font-weight:normal;font-family:'Liberation Sans',sans-serif;max-width:118px;overflow:hidden;">CartesianPlot</div>
<div class="a" style="left:164.5px;top:317px;width:11.5px;height:1px;background:#55595e;border-radius:0px;"></div>
<svg class="a" style="left:159px;top:314px;" width="11" height="7" viewBox="0 0 11 7"><path d="M0.5 0.8 L5.5 5.8 L10.5 0.8" stroke="#fcfcfc" fill="none" stroke-width="1.1"/></svg>
<div class="a" style="left:195px;top:330px;width:267px;height:26px;background:#232629;border-radius:0px;"></div>
<svg class="a" style="left:200px;top:336px;" width="15" height="15" viewBox="0 0 15 15"><path d="M1.5 1 V13.5 H13.5 M5 12 V13 M8 12 V13 M11 12 V13" fill="none" stroke="#fcfcfc" stroke-width="1.1"/></svg>
<div class="t" style="left:220.5px;top:337.0px;font-size:13.6px;color:#fcfcfc;font-weight:normal;font-family:'Liberation Sans',sans-serif;">x axis 1</div>
<div class="t" style="left:344.0px;top:337.0px;font-size:13.6px;color:#fcfcfc;font-weight:normal;font-family:'Liberation Sans',sans-serif;max-width:118px;overflow:hidden;">Axis</div>
<div class="a" style="left:184.5px;top:343px;width:11.5px;height:1px;background:#55595e;border-radius:0px;"></div>
<svg class="a" style="left:200px;top:362px;" width="15" height="15" viewBox="0 0 15 15"><path d="M1.5 1 V13.5 H13.5 M5 12 V13 M8 12 V13 M11 12 V13" fill="none" stroke="#fcfcfc" stroke-width="1.1"/></svg>
<div class="t" style="left:220.5px;top:363.0px;font-size:13.6px;color:#fcfcfc;font-weight:normal;font-family:'Liberation Sans',sans-serif;">x axis 2</div>
<div class="t" style="left:344.0px;top:363.0px;font-size:13.6px;color:#fcfcfc;font-weight:normal;font-family:'Liberation Sans',sans-serif;max-width:118px;overflow:hidden;">Axis</div>
<div class="a" style="left:184.5px;top:369px;width:11.5px;height:1px;background:#55595e;border-radius:0px;"></div>
<div class="a" style="left:195px;top:382px;width:267px;height:26px;background:#232629;border-radius:0px;"></div>
<svg class="a" style="left:200px;top:388px;" width="15" height="15" viewBox="0 0 15 15"><path d="M1.5 1 V13.5 H13.5 M2 3.5 H3 M2 6.5 H3 M2 9.5 H3" fill="none" stroke="#fcfcfc" stroke-width="1.1"/></svg>
<div class="t" style="left:220.5px;top:389.0px;font-size:13.6px;color:#fcfcfc;font-weight:normal;font-family:'Liberation Sans',sans-serif;">y axis 1</div>
<div class="t" style="left:344.0px;top:389.0px;font-size:13.6px;color:#fcfcfc;font-weight:normal;font-family:'Liberation Sans',sans-serif;max-width:118px;overflow:hidden;">Axis</div>
<div class="a" style="left:184.5px;top:395px;width:11.5px;height:1px;background:#55595e;border-radius:0px;"></div>
<svg class="a" style="left:200px;top:414px;" width="15" height="15" viewBox="0 0 15 15"><path d="M1.5 1 V13.5 H13.5 M2 3.5 H3 M2 6.5 H3 M2 9.5 H3" fill="none" stroke="#fcfcfc" stroke-width="1.1"/></svg>
<div class="t" style="left:220.5px;top:415.0px;font-size:13.6px;color:#fcfcfc;font-weight:normal;font-family:'Liberation Sans',sans-serif;">y axis 2</div>
<div class="t" style="left:344.0px;top:415.0px;font-size:13.6px;color:#fcfcfc;font-weight:normal;font-family:'Liberation Sans',sans-serif;max-width:118px;overflow:hidden;">Axis</div>
<div class="a" style="left:184.5px;top:421px;width:11.5px;height:1px;background:#55595e;border-radius:0px;"></div>
<div class="a" style="left:195px;top:434px;width:267px;height:26px;background:#232629;border-radius:0px;"></div>
<svg class="a" style="left:200px;top:440px;" width="15" height="15" viewBox="0 0 15 15"><path d="M1.5 1 V13.5 H13.5 M2 3 L7 11 M2 12 L12 3 M7 10 L13 12" fill="none" stroke="#fcfcfc" stroke-width="1"/></svg>
<div class="t" style="left:220.5px;top:441.0px;font-size:13.6px;color:#fcfcfc;font-weight:normal;font-family:'Liberation Sans',sans-serif;">data</div>
<div class="t" style="left:344.0px;top:441.0px;font-size:13.6px;color:#fcfcfc;font-weight:normal;font-family:'Liberation Sans',sans-serif;max-width:118px;overflow:hidden;">XYCurve</div>
<div class="a" style="left:184.5px;top:447px;width:11.5px;height:1px;background:#55595e;border-radius:0px;"></div>
<div class="a" style="left:195px;top:460px;width:267px;height:26px;background:#1e4a62;border-radius:0px;"></div>
<svg class="a" style="left:200px;top:466px;" width="15" height="15" viewBox="0 0 15 15"><path d="M1.5 1 V13.5 H13.5 M2 12 L12 3" fill="none" stroke="#fcfcfc" stroke-width="1"/><path d="M5 6 H6 M9 4 H10 M8 9 H9 M11 7 H12" stroke="#fcfcfc"/></svg>
<div class="t" style="left:220.5px;top:467.0px;font-size:13.6px;color:#fcfcfc;font-weight:normal;font-family:'Liberation Sans',sans-serif;">fit</div>
<div class="t" style="left:344.0px;top:467.0px;font-size:13.6px;color:#fcfcfc;font-weight:normal;font-family:'Liberation Sans',sans-serif;max-width:118px;overflow:hidden;">XYFitCurve</div>
<div class="a" style="left:184.5px;top:473px;width:11.5px;height:1px;background:#55595e;border-radius:0px;"></div>
<svg class="a" style="left:179px;top:470px;" width="11" height="7" viewBox="0 0 11 7"><path d="M0.5 0.8 L5.5 5.8 L10.5 0.8" stroke="#fcfcfc" fill="none" stroke-width="1.1"/></svg>
<div class="a" style="left:215px;top:486px;width:247px;height:26px;background:#232629;border-radius:0px;"></div>
<svg class="a" style="left:220px;top:492px;" width="15" height="15" viewBox="0 0 15 15"><path d="M1 2.5 H13 M1 5.5 H10 M1 8.5 H13 M1 11.5 H9 M12 12 H13" stroke="#fcfcfc" stroke-width="1.1"/></svg>
<div class="t" style="left:240.5px;top:493.0px;font-size:13.6px;color:#fcfcfc;font-weight:normal;font-family:'Liberation Sans',sans-serif;">residuals</div>
<div class="t" style="left:344.0px;top:493.0px;font-size:13.6px;color:#fcfcfc;font-weight:normal;font-family:'Liberation Sans',sans-serif;max-width:118px;overflow:hidden;">Column</div>
<div class="a" style="left:204.5px;top:499px;width:11.5px;height:1px;background:#55595e;border-radius:0px;"></div>
<svg class="a" style="left:200px;top:518px;" width="15" height="15" viewBox="0 0 15 15"><path d="M1.5 1.5 H5 M3 1.5 V13.5 M1.5 13.5 H5 M7 12.5 H13 V10.5" fill="none" stroke="#fcfcfc" stroke-width="1.1"/></svg>
<div class="t" style="left:220.5px;top:519.0px;font-size:13.6px;color:#fcfcfc;font-weight:normal;font-family:'Liberation Sans',sans-serif;">legend</div>
<div class="t" style="left:344.0px;top:519.0px;font-size:13.6px;color:#fcfcfc;font-weight:normal;font-family:'Liberation Sans',sans-serif;max-width:118px;overflow:hidden;">CartesianPlotLegen</div>
<div class="a" style="left:184.5px;top:525px;width:11.5px;height:1px;background:#55595e;border-radius:0px;"></div>
<div class="a" style="left:155px;top:538px;width:307px;height:26px;background:#232629;border-radius:0px;"></div>
<svg class="a" style="left:160px;top:544px;" width="15" height="15" viewBox="0 0 15 15"><path d="M1.5 1.5 H13.5 V13.5 H1.5 Z M1.5 5.5 H13.5 M1.5 9.5 H13.5 M5.5 1.5 V13.5 M9.5 1.5 V13.5" fill="none" stroke="#fcfcfc" stroke-width="1.1"/><rect x="1.5" y="1.5" width="4" height="4" fill="#fcfcfc"/></svg>
<div class="t" style="left:180.5px;top:545.0px;font-size:13.6px;color:#fcfcfc;font-weight:normal;font-family:'Liberation Sans',sans-serif;">ENSO-data</div>
<div class="t" style="left:344.0px;top:545.0px;font-size:13.6px;color:#fcfcfc;font-weight:normal;font-family:'Liberation Sans',sans-serif;max-width:118px;overflow:hidden;">Spreadsheet</div>
<div class="a" style="left:144.5px;top:551px;width:11.5px;height:1px;background:#55595e;border-radius:0px;"></div>
<svg class="a" style="left:139px;top:548px;" width="11" height="7" viewBox="0 0 11 7"><path d="M0.5 0.8 L5.5 5.8 L10.5 0.8" stroke="#fcfcfc" fill="none" stroke-width="1.1"/></svg>
<svg class="a" style="left:180px;top:570px;" width="15" height="15" viewBox="0 0 15 15"><path d="M1 2.5 H13 M1 5.5 H10 M1 8.5 H13 M1 11.5 H9 M12 12 H13" stroke="#fcfcfc" stroke-width="1.1"/></svg>
<div class="t" style="left:200.5px;top:571.0px;font-size:13.6px;color:#fcfcfc;font-weight:normal;font-family:'Liberation Sans',sans-serif;">y</div>
<div class="t" style="left:344.0px;top:571.0px;font-size:13.6px;color:#fcfcfc;font-weight:normal;font-family:'Liberation Sans',sans-serif;max-width:118px;overflow:hidden;">Column</div>
<div class="a" style="left:164.5px;top:577px;width:11.5px;height:1px;background:#55595e;border-radius:0px;"></div>
<div class="a" style="left:175px;top:590px;width:287px;height:26px;background:#232629;border-radius:0px;"></div>
<svg class="a" style="left:180px;top:596px;" width="15" height="15" viewBox="0 0 15 15"><path d="M1 2.5 H13 M1 5.5 H10 M1 8.5 H13 M1 11.5 H9 M12 12 H13" stroke="#fcfcfc" stroke-width="1.1"/></svg>
<div class="t" style="left:200.5px;top:597.0px;font-size:13.6px;color:#fcfcfc;font-weight:normal;font-family:'Liberation Sans',sans-serif;">x</div>
<div class="t" style="left:344.0px;top:597.0px;font-size:13.6px;color:#fcfcfc;font-weight:normal;font-family:'Liberation Sans',sans-serif;max-width:118px;overflow:hidden;">Column</div>
<div class="a" style="left:164.5px;top:603px;width:11.5px;height:1px;background:#55595e;border-radius:0px;"></div>
<div class="a" style="left:124px;top:252px;width:1px;height:6px;background:#55595e;border-radius:0px;"></div>
<div class="a" style="left:144px;top:278px;width:1px;height:6px;background:#55595e;border-radius:0px;"></div>
<div class="a" style="left:144px;top:297px;width:1px;height:252px;background:#55595e;border-radius:0px;"></div>
<div class="a" style="left:164px;top:302px;width:1px;height:8px;background:#55595e;border-radius:0px;"></div>
<div class="a" style="left:184px;top:329px;width:1px;height:197px;background:#55595e;border-radius:0px;"></div>
<div class="a" style="left:204px;top:482px;width:1px;height:18px;background:#55595e;border-radius:0px;"></div>
<div class="a" style="left:164px;top:557px;width:1px;height:47px;background:#55595e;border-radius:0px;"></div>
<div class="a" style="left:115px;top:1170px;width:347px;height:1px;background:#3a3f44;border-radius:0px;"></div>
<div class="a" style="left:120px;top:1176px;width:23px;height:10px;background:#4e5256;border:1px solid #6a6e72;box-sizing:border-box;border-radius:5px;"></div>
<div class="t" style="left:71.0px;top:1199.8px;font-size:13.2px;color:#fcfcfc;font-weight:normal;font-family:'Liberation Sans',sans-serif;">x=147.107, y=0.994722</div>
<div class="a" style="left:467px;top:158px;width:969px;height:1036px;background:#282b2f;border:2px solid #5c6166;box-sizing:border-box;border-radius:2px;"></div>
<div class="a" style="left:492px;top:217px;width:918px;height:918px;background:#fdf6e3;border-radius:0px;"></div>
<svg class="a" style="left:0;top:0" width="2050" height="1294" viewBox="0 0 2050 1294"><rect x="522" y="247" width="859" height="858" fill="none" stroke="#5c7580" stroke-width="2"/><line x1="726.4" y1="340" x2="726.4" y2="1012" stroke="#d3d2c4" stroke-width="1"/><line x1="838.7" y1="340" x2="838.7" y2="1012" stroke="#d3d2c4" stroke-width="1"/><line x1="951.1" y1="340" x2="951.1" y2="1012" stroke="#d3d2c4" stroke-width="1"/><line x1="1063.5" y1="340" x2="1063.5" y2="1012" stroke="#d3d2c4" stroke-width="1"/><line x1="1175.8" y1="340" x2="1175.8" y2="1012" stroke="#d3d2c4" stroke-width="1"/><line x1="615" y1="788.3" x2="1287" y2="788.3" stroke="#d3d2c4" stroke-width="1"/><line x1="615" y1="563.5" x2="1287" y2="563.5" stroke="#d3d2c4" stroke-width="1"/><line x1="615" y1="900.8" x2="1287" y2="900.8" stroke="#d9d6c6" stroke-width="1.1" stroke-dasharray="4.8 1.7"/><line x1="615" y1="675.9" x2="1287" y2="675.9" stroke="#d9d6c6" stroke-width="1.1" stroke-dasharray="4.8 1.7"/><line x1="615" y1="451.0" x2="1287" y2="451.0" stroke="#d9d6c6" stroke-width="1.1" stroke-dasharray="4.8 1.7"/><path d="M614.0 337.6 V1014.2 M613.0 1013.2 H1289.2 M613.0 338.6 H1289.2 M1288.2 337.6 V1014.2" stroke="#5c7580" stroke-width="2" fill="none"/><path d="M614.0 1013.2 V1000.2 M726.4 1013.2 V1000.2 M838.7 1013.2 V1000.2 M951.1 1013.2 V1000.2 M1063.5 1013.2 V1000.2 M1175.8 1013.2 V1000.2 M1288.2 1013.2 V1000.2 M681.4 338.6 V346.6 M748.8 338.6 V352.6 M816.3 338.6 V346.6 M883.7 338.6 V352.6 M951.1 338.6 V346.6 M1018.5 338.6 V352.6 M1085.9 338.6 V346.6 M1153.4 338.6 V352.6 M1220.8 338.6 V346.6 M614.0 1013.2 H627.0 M614.0 788.3 H627.0 M614.0 563.5 H627.0 M614.0 338.6 H627.0 M614.0 900.8 H621.0 M614.0 675.9 H621.0 M614.0 451.0 H621.0 M1288.2 338.6 H1275 M1288.2 473.5 H1275 M1288.2 608.4 H1275 M1288.2 743.4 H1275 M1288.2 878.3 H1275 M1288.2 1013.2 H1275" stroke="#5c7580" stroke-width="2" fill="none"/><circle cx="617.7" cy="529.7" r="5.5" fill="#dc322f"/><circle cx="621.5" cy="589.7" r="5.5" fill="#dc322f"/><circle cx="625.2" cy="615.9" r="5.5" fill="#dc322f"/><circle cx="629.0" cy="593.4" r="5.5" fill="#dc322f"/><circle cx="632.7" cy="604.7" r="5.5" fill="#dc322f"/><circle cx="636.5" cy="732.1" r="5.5" fill="#dc322f"/><circle cx="640.2" cy="724.6" r="5.5" fill="#dc322f"/><circle cx="644.0" cy="574.7" r="5.5" fill="#dc322f"/><circle cx="647.7" cy="529.7" r="5.5" fill="#dc322f"/><circle cx="651.5" cy="477.3" r="5.5" fill="#dc322f"/><circle cx="655.2" cy="604.7" r="5.5" fill="#dc322f"/><circle cx="658.9" cy="499.8" r="5.5" fill="#dc322f"/><circle cx="662.7" cy="372.3" r="5.5" fill="#dc322f"/><circle cx="666.4" cy="488.5" r="5.5" fill="#dc322f"/><circle cx="670.2" cy="439.8" r="5.5" fill="#dc322f"/><circle cx="673.9" cy="694.6" r="5.5" fill="#dc322f"/><circle cx="677.7" cy="799.6" r="5.5" fill="#dc322f"/><circle cx="681.4" cy="807.1" r="5.5" fill="#dc322f"/><circle cx="685.2" cy="728.4" r="5.5" fill="#dc322f"/><circle cx="688.9" cy="690.9" r="5.5" fill="#dc322f"/><circle cx="692.7" cy="739.6" r="5.5" fill="#dc322f"/><circle cx="696.4" cy="728.4" r="5.5" fill="#dc322f"/><circle cx="700.1" cy="537.2" r="5.5" fill="#dc322f"/><circle cx="703.9" cy="600.9" r="5.5" fill="#dc322f"/><circle cx="707.6" cy="537.2" r="5.5" fill="#dc322f"/><circle cx="711.4" cy="529.7" r="5.5" fill="#dc322f"/><circle cx="715.1" cy="526.0" r="5.5" fill="#dc322f"/><circle cx="718.9" cy="604.7" r="5.5" fill="#dc322f"/><circle cx="722.6" cy="623.4" r="5.5" fill="#dc322f"/><circle cx="726.4" cy="630.9" r="5.5" fill="#dc322f"/><circle cx="730.1" cy="713.4" r="5.5" fill="#dc322f"/><circle cx="733.9" cy="604.7" r="5.5" fill="#dc322f"/><circle cx="737.6" cy="503.5" r="5.5" fill="#dc322f"/><circle cx="741.3" cy="619.7" r="5.5" fill="#dc322f"/><circle cx="745.1" cy="668.4" r="5.5" fill="#dc322f"/><circle cx="748.8" cy="548.5" r="5.5" fill="#dc322f"/><circle cx="752.6" cy="537.2" r="5.5" fill="#dc322f"/><circle cx="756.3" cy="514.7" r="5.5" fill="#dc322f"/><circle cx="760.1" cy="634.7" r="5.5" fill="#dc322f"/><circle cx="763.8" cy="720.9" r="5.5" fill="#dc322f"/><circle cx="767.6" cy="833.3" r="5.5" fill="#dc322f"/><circle cx="771.3" cy="900.8" r="5.5" fill="#dc322f"/><circle cx="775.1" cy="919.5" r="5.5" fill="#dc322f"/><circle cx="778.8" cy="777.1" r="5.5" fill="#dc322f"/><circle cx="782.5" cy="649.7" r="5.5" fill="#dc322f"/><circle cx="786.3" cy="578.5" r="5.5" fill="#dc322f"/><circle cx="790.0" cy="690.9" r="5.5" fill="#dc322f"/><circle cx="793.8" cy="548.5" r="5.5" fill="#dc322f"/><circle cx="797.5" cy="619.7" r="5.5" fill="#dc322f"/><circle cx="801.3" cy="514.7" r="5.5" fill="#dc322f"/><circle cx="805.0" cy="623.4" r="5.5" fill="#dc322f"/><circle cx="808.8" cy="709.6" r="5.5" fill="#dc322f"/><circle cx="812.5" cy="874.5" r="5.5" fill="#dc322f"/><circle cx="816.3" cy="612.2" r="5.5" fill="#dc322f"/><circle cx="820.0" cy="822.1" r="5.5" fill="#dc322f"/><circle cx="823.8" cy="623.4" r="5.5" fill="#dc322f"/><circle cx="827.5" cy="604.7" r="5.5" fill="#dc322f"/><circle cx="831.2" cy="574.7" r="5.5" fill="#dc322f"/><circle cx="835.0" cy="586.0" r="5.5" fill="#dc322f"/><circle cx="838.7" cy="499.8" r="5.5" fill="#dc322f"/><circle cx="842.5" cy="484.8" r="5.5" fill="#dc322f"/><circle cx="846.2" cy="488.5" r="5.5" fill="#dc322f"/><circle cx="850.0" cy="544.7" r="5.5" fill="#dc322f"/><circle cx="853.7" cy="777.1" r="5.5" fill="#dc322f"/><circle cx="857.5" cy="653.4" r="5.5" fill="#dc322f"/><circle cx="861.2" cy="574.7" r="5.5" fill="#dc322f"/><circle cx="865.0" cy="825.8" r="5.5" fill="#dc322f"/><circle cx="868.7" cy="608.4" r="5.5" fill="#dc322f"/><circle cx="872.4" cy="537.2" r="5.5" fill="#dc322f"/><circle cx="876.2" cy="608.4" r="5.5" fill="#dc322f"/><circle cx="879.9" cy="571.0" r="5.5" fill="#dc322f"/><circle cx="883.7" cy="541.0" r="5.5" fill="#dc322f"/><circle cx="887.4" cy="424.8" r="5.5" fill="#dc322f"/><circle cx="891.2" cy="541.0" r="5.5" fill="#dc322f"/><circle cx="894.9" cy="458.5" r="5.5" fill="#dc322f"/><circle cx="898.7" cy="720.9" r="5.5" fill="#dc322f"/><circle cx="902.4" cy="747.1" r="5.5" fill="#dc322f"/><circle cx="906.2" cy="593.4" r="5.5" fill="#dc322f"/><circle cx="909.9" cy="709.6" r="5.5" fill="#dc322f"/><circle cx="913.6" cy="773.3" r="5.5" fill="#dc322f"/><circle cx="917.4" cy="818.3" r="5.5" fill="#dc322f"/><circle cx="921.1" cy="563.5" r="5.5" fill="#dc322f"/><circle cx="924.9" cy="630.9" r="5.5" fill="#dc322f"/><circle cx="928.6" cy="537.2" r="5.5" fill="#dc322f"/><circle cx="932.4" cy="630.9" r="5.5" fill="#dc322f"/><circle cx="936.1" cy="462.3" r="5.5" fill="#dc322f"/><circle cx="939.9" cy="556.0" r="5.5" fill="#dc322f"/><circle cx="943.6" cy="747.1" r="5.5" fill="#dc322f"/><circle cx="947.4" cy="799.6" r="5.5" fill="#dc322f"/><circle cx="951.1" cy="762.1" r="5.5" fill="#dc322f"/><circle cx="954.8" cy="867.0" r="5.5" fill="#dc322f"/><circle cx="958.6" cy="694.6" r="5.5" fill="#dc322f"/><circle cx="962.3" cy="702.1" r="5.5" fill="#dc322f"/><circle cx="966.1" cy="608.4" r="5.5" fill="#dc322f"/><circle cx="969.8" cy="387.3" r="5.5" fill="#dc322f"/><circle cx="973.6" cy="541.0" r="5.5" fill="#dc322f"/><circle cx="977.3" cy="544.7" r="5.5" fill="#dc322f"/><circle cx="981.1" cy="544.7" r="5.5" fill="#dc322f"/><circle cx="984.8" cy="645.9" r="5.5" fill="#dc322f"/><circle cx="988.6" cy="743.4" r="5.5" fill="#dc322f"/><circle cx="992.3" cy="859.5" r="5.5" fill="#dc322f"/><circle cx="996.0" cy="615.9" r="5.5" fill="#dc322f"/><circle cx="999.8" cy="634.7" r="5.5" fill="#dc322f"/><circle cx="1003.5" cy="634.7" r="5.5" fill="#dc322f"/><circle cx="1007.3" cy="567.2" r="5.5" fill="#dc322f"/><circle cx="1011.0" cy="503.5" r="5.5" fill="#dc322f"/><circle cx="1014.8" cy="402.3" r="5.5" fill="#dc322f"/><circle cx="1018.5" cy="353.6" r="5.5" fill="#dc322f"/><circle cx="1022.3" cy="432.3" r="5.5" fill="#dc322f"/><circle cx="1026.0" cy="413.6" r="5.5" fill="#dc322f"/><circle cx="1029.8" cy="443.5" r="5.5" fill="#dc322f"/><circle cx="1033.5" cy="593.4" r="5.5" fill="#dc322f"/><circle cx="1037.2" cy="477.3" r="5.5" fill="#dc322f"/><circle cx="1041.0" cy="469.8" r="5.5" fill="#dc322f"/><circle cx="1044.7" cy="694.6" r="5.5" fill="#dc322f"/><circle cx="1048.5" cy="563.5" r="5.5" fill="#dc322f"/><circle cx="1052.2" cy="537.2" r="5.5" fill="#dc322f"/><circle cx="1056.0" cy="589.7" r="5.5" fill="#dc322f"/><circle cx="1059.7" cy="469.8" r="5.5" fill="#dc322f"/><circle cx="1063.5" cy="447.3" r="5.5" fill="#dc322f"/><circle cx="1067.2" cy="623.4" r="5.5" fill="#dc322f"/><circle cx="1071.0" cy="582.2" r="5.5" fill="#dc322f"/><circle cx="1074.7" cy="511.0" r="5.5" fill="#dc322f"/><circle cx="1078.4" cy="732.1" r="5.5" fill="#dc322f"/><circle cx="1082.2" cy="990.7" r="5.5" fill="#dc322f"/><circle cx="1085.9" cy="1002.0" r="5.5" fill="#dc322f"/><circle cx="1089.7" cy="807.1" r="5.5" fill="#dc322f"/><circle cx="1093.4" cy="825.8" r="5.5" fill="#dc322f"/><circle cx="1097.2" cy="840.8" r="5.5" fill="#dc322f"/><circle cx="1100.9" cy="705.9" r="5.5" fill="#dc322f"/><circle cx="1104.7" cy="642.2" r="5.5" fill="#dc322f"/><circle cx="1108.4" cy="668.4" r="5.5" fill="#dc322f"/><circle cx="1112.2" cy="544.7" r="5.5" fill="#dc322f"/><circle cx="1115.9" cy="604.7" r="5.5" fill="#dc322f"/><circle cx="1119.7" cy="642.2" r="5.5" fill="#dc322f"/><circle cx="1123.4" cy="679.6" r="5.5" fill="#dc322f"/><circle cx="1127.1" cy="728.4" r="5.5" fill="#dc322f"/><circle cx="1130.9" cy="657.2" r="5.5" fill="#dc322f"/><circle cx="1134.6" cy="698.4" r="5.5" fill="#dc322f"/><circle cx="1138.4" cy="612.2" r="5.5" fill="#dc322f"/><circle cx="1142.1" cy="503.5" r="5.5" fill="#dc322f"/><circle cx="1145.9" cy="499.8" r="5.5" fill="#dc322f"/><circle cx="1149.6" cy="499.8" r="5.5" fill="#dc322f"/><circle cx="1153.4" cy="394.8" r="5.5" fill="#dc322f"/><circle cx="1157.1" cy="383.6" r="5.5" fill="#dc322f"/><circle cx="1160.9" cy="372.3" r="5.5" fill="#dc322f"/><circle cx="1164.6" cy="436.0" r="5.5" fill="#dc322f"/><circle cx="1168.3" cy="657.2" r="5.5" fill="#dc322f"/><circle cx="1172.1" cy="784.6" r="5.5" fill="#dc322f"/><circle cx="1175.8" cy="634.7" r="5.5" fill="#dc322f"/><circle cx="1179.6" cy="664.7" r="5.5" fill="#dc322f"/><circle cx="1183.3" cy="814.6" r="5.5" fill="#dc322f"/><circle cx="1187.1" cy="593.4" r="5.5" fill="#dc322f"/><circle cx="1190.8" cy="391.1" r="5.5" fill="#dc322f"/><circle cx="1194.6" cy="428.5" r="5.5" fill="#dc322f"/><circle cx="1198.3" cy="563.5" r="5.5" fill="#dc322f"/><circle cx="1202.1" cy="582.2" r="5.5" fill="#dc322f"/><circle cx="1205.8" cy="690.9" r="5.5" fill="#dc322f"/><circle cx="1209.5" cy="496.0" r="5.5" fill="#dc322f"/><circle cx="1213.3" cy="687.1" r="5.5" fill="#dc322f"/><circle cx="1217.0" cy="690.9" r="5.5" fill="#dc322f"/><circle cx="1220.8" cy="690.9" r="5.5" fill="#dc322f"/><circle cx="1224.5" cy="687.1" r="5.5" fill="#dc322f"/><circle cx="1228.3" cy="533.5" r="5.5" fill="#dc322f"/><circle cx="1232.0" cy="518.5" r="5.5" fill="#dc322f"/><circle cx="1235.8" cy="488.5" r="5.5" fill="#dc322f"/><circle cx="1239.5" cy="511.0" r="5.5" fill="#dc322f"/><circle cx="1243.3" cy="458.5" r="5.5" fill="#dc322f"/><defs><filter id="bl" x="-5%" y="-5%" width="110%" height="110%"><feGaussianBlur stdDeviation="1.3"/></filter></defs><path d="M617.7,478.0 L618.4,499.7 L619.0,507.7 L619.6,503.8 L620.3,525.5 L620.9,538.7 L621.5,533.4 L622.1,547.7 L622.8,561.6 L623.4,562.6 L624.0,576.8 L624.6,583.9 L625.3,603.5 L625.9,607.6 L626.5,617.3 L627.1,633.9 L627.8,634.6 L628.4,650.2 L629.0,661.8 L629.6,667.7 L630.3,678.2 L630.9,677.3 L631.5,689.9 L632.1,703.4 L632.8,721.9 L633.4,710.9 L634.0,711.5 L634.7,696.0 L635.3,727.3 L635.9,725.2 L636.5,758.3 L637.2,736.9 L637.8,740.3 L638.4,710.2 L639.0,725.6 L639.7,738.8 L640.3,749.8 L640.9,721.3 L641.5,700.9 L642.2,721.2 L642.8,693.0 L643.4,700.0 L644.0,676.7 L644.7,678.7 L645.3,672.4 L645.9,667.5 L646.5,652.3 L647.2,644.0 L647.8,626.3 L648.4,621.5 L649.1,607.5 L649.7,606.0 L650.3,593.6 L650.9,584.1 L651.6,566.0 L652.2,561.5 L652.8,553.5 L653.4,553.0 L654.1,533.6 L654.7,531.1 L655.3,510.8 L655.9,519.3 L656.6,520.4 L657.2,480.3 L657.8,488.1 L658.4,498.2 L659.1,521.5 L659.7,502.7 L660.3,485.4 L660.9,518.8 L661.6,513.8 L662.2,505.7 L662.8,533.7 L663.5,516.3 L664.1,521.7 L664.7,534.5 L665.3,533.9 L666.0,533.9 L666.6,550.9 L667.2,552.7 L667.8,560.9 L668.5,562.1 L669.1,581.9 L669.7,589.8 L670.3,604.6 L671.0,611.1 L671.6,618.3 L672.2,634.4 L672.8,638.3 L673.5,648.6 L674.1,650.8 L674.7,667.0 L675.3,677.1 L676.0,690.1 L676.6,692.4 L677.2,704.1 L677.9,692.3 L678.5,703.7 L679.1,714.4 L679.7,698.3 L680.4,710.3 L681.0,710.4 L681.6,751.4 L682.2,727.9 L682.9,716.9 L683.5,752.1 L684.1,712.5 L684.7,734.8 L685.4,738.3 L686.0,719.5 L686.6,718.2 L687.2,719.0 L687.9,701.7 L688.5,691.3 L689.1,689.5 L689.8,678.8 L690.4,667.7 L691.0,651.1 L691.6,647.1 L692.3,638.1 L692.9,635.5 L693.5,615.5 L694.1,608.7 L694.8,591.3 L695.4,585.0 L696.0,582.3 L696.6,575.5 L697.3,558.3 L697.9,552.7 L698.5,548.5 L699.1,534.7 L699.8,523.9 L700.4,541.2 L701.0,505.2 L701.6,515.5 L702.3,478.5 L702.9,490.8 L703.5,504.0 L704.2,531.3 L704.8,495.9 L705.4,494.1 L706.0,475.4 L706.7,518.9 L707.3,518.8 L707.9,532.4 L708.5,498.3 L709.2,508.0 L709.8,508.7 L710.4,526.1 L711.0,536.4 L711.7,539.0 L712.3,553.3 L712.9,562.3 L713.5,577.4 L714.2,584.4 L714.8,594.7 L715.4,607.5 L716.0,610.4 L716.7,618.2 L717.3,623.6 L717.9,642.4 L718.6,653.8 L719.2,667.0 L719.8,667.8 L720.4,679.5 L721.1,679.0 L721.7,697.9 L722.3,703.0 L722.9,693.7 L723.6,715.1 L724.2,709.1 L724.8,750.6 L725.4,729.5 L726.1,724.9 L726.7,707.5 L727.3,743.9 L727.9,735.5 L728.6,758.2 L729.2,711.0 L729.8,731.5 L730.4,737.7 L731.1,716.7 L731.7,700.1 L732.3,690.2 L733.0,697.6 L733.6,688.5 L734.2,676.9 L734.8,671.8 L735.5,667.0 L736.1,663.1 L736.7,648.1 L737.3,637.7 L738.0,633.5 L738.6,617.2 L739.2,608.6 L739.8,590.8 L740.5,589.0 L741.1,580.0 L741.7,573.4 L742.3,557.1 L743.0,548.3 L743.6,531.3 L744.2,531.1 L744.9,532.6 L745.5,505.8 L746.1,509.2 L746.7,502.5 L747.4,525.2 L748.0,510.8 L748.6,506.2 L749.2,524.0 L749.9,487.6 L750.5,483.7 L751.1,524.8 L751.7,488.3 L752.4,508.8 L753.0,487.2 L753.6,509.9 L754.2,508.8 L754.9,509.2 L755.5,529.2 L756.1,539.0 L756.7,540.7 L757.4,554.3 L758.0,566.6 L758.6,579.1 L759.3,580.4 L759.9,589.6 L760.5,596.8 L761.1,611.2 L761.8,624.9 L762.4,639.4 L763.0,646.6 L763.6,653.6 L764.3,655.2 L764.9,671.7 L765.5,683.7 L766.1,696.2 L766.8,702.8 L767.4,702.0 L768.0,726.0 L768.6,700.8 L769.3,707.0 L769.9,693.3 L770.5,726.4 L771.1,712.0 L771.8,760.2 L772.4,732.5 L773.0,727.6 L773.7,754.8 L774.3,714.3 L774.9,721.3 L775.5,695.3 L776.2,702.3 L776.8,700.5 L777.4,716.4 L778.0,702.0 L778.7,688.4 L779.3,674.2 L779.9,674.6 L780.5,663.1 L781.2,660.8 L781.8,647.9 L782.4,630.9 L783.0,617.8 L783.7,610.6 L784.3,607.0 L784.9,601.2 L785.5,587.5 L786.2,574.3 L786.8,557.2 L787.4,554.0 L788.1,548.4 L788.7,548.2 L789.3,538.1 L789.9,526.7 L790.6,501.4 L791.2,524.6 L791.8,511.7 L792.4,535.0 L793.1,515.3 L793.7,490.1 L794.3,518.3 L794.9,511.5 L795.6,517.2 L796.2,477.2 L796.8,507.7 L797.4,501.9 L798.1,531.6 L798.7,512.3 L799.3,511.7 L800.0,509.8 L800.6,530.1 L801.2,536.8 L801.8,554.7 L802.5,558.0 L803.1,566.2 L803.7,582.3 L804.3,582.8 L805.0,595.1 L805.6,612.0 L806.2,613.0 L806.8,624.9 L807.5,641.1 L808.1,643.8 L808.7,652.9 L809.3,670.3 L810.0,674.9 L810.6,678.8 L811.2,700.4 L811.8,702.3 L812.5,712.4 L813.1,724.2 L813.7,727.0 L814.4,723.5 L815.0,695.2 L815.6,729.4 L816.2,718.1 L816.9,751.9 L817.5,725.4 L818.1,718.5 L818.7,749.4 L819.4,719.4 L820.0,709.2 L820.6,701.7 L821.2,713.5 L821.9,702.1 L822.5,718.6 L823.1,695.1 L823.7,691.8 L824.4,674.0 L825.0,672.8 L825.6,663.6 L826.2,660.1 L826.9,639.0 L827.5,635.3 L828.1,627.2 L828.8,610.7 L829.4,605.1 L830.0,597.7 L830.6,582.4 L831.3,572.4 L831.9,557.9 L832.5,555.3 L833.1,544.9 L833.8,549.3 L834.4,536.0 L835.0,525.0 L835.6,500.8 L836.3,521.4 L836.9,518.8 L837.5,526.2 L838.1,516.5 L838.8,487.4 L839.4,471.1 L840.0,510.2 L840.6,496.2 L841.3,470.6 L841.9,511.6 L842.5,493.3 L843.2,536.0 L843.8,518.1 L844.4,512.3 L845.0,511.6 L845.7,531.0 L846.3,543.2 L846.9,555.4 L847.5,560.5 L848.2,568.6 L848.8,585.7 L849.4,583.9 L850.0,594.5 L850.7,613.0 L851.3,614.4 L851.9,626.6 L852.5,632.5 L853.2,648.4 L853.8,659.7 L854.4,672.5 L855.1,671.6 L855.7,682.7 L856.3,702.8 L856.9,690.6 L857.6,715.7 L858.2,732.3 L858.8,723.5 L859.4,724.0 L860.1,752.3 L860.7,721.9 L861.3,747.0 L861.9,707.2 L862.6,714.9 L863.2,727.5 L863.8,695.1 L864.4,722.8 L865.1,705.9 L865.7,692.6 L866.3,723.6 L866.9,704.6 L867.6,713.1 L868.2,687.3 L868.8,686.5 L869.5,685.0 L870.1,668.2 L870.7,658.6 L871.3,641.8 L872.0,640.7 L872.6,629.9 L873.2,614.1 L873.8,611.5 L874.5,598.6 L875.1,582.8 L875.7,578.2 L876.3,574.0 L877.0,568.0 L877.6,551.5 L878.2,544.9 L878.8,528.9 L879.5,532.5 L880.1,524.9 L880.7,502.8 L881.3,500.0 L882.0,509.7 L882.6,483.1 L883.2,492.2 L883.9,516.3 L884.5,532.1 L885.1,490.3 L885.7,500.7 L886.4,528.4 L887.0,517.0 L887.6,503.5 L888.2,495.4 L888.9,507.5 L889.5,525.8 L890.1,539.5 L890.7,537.1 L891.4,542.8 L892.0,545.7 L892.6,560.2 L893.2,569.0 L893.9,572.5 L894.5,589.5 L895.1,596.0 L895.7,602.6 L896.4,621.9 L897.0,632.9 L897.6,632.6 L898.3,648.9 L898.9,660.4 L899.5,661.7 L900.1,675.5 L900.8,683.8 L901.4,704.5 L902.0,695.7 L902.6,713.7 L903.3,731.5 L903.9,713.0 L904.5,731.5 L905.1,751.4 L905.8,745.2 L906.4,738.2 L907.0,758.7 L907.6,744.9 L908.3,727.5 L908.9,756.4 L909.5,710.5 L910.2,731.6 L910.8,738.8 L911.4,714.6 L912.0,705.9 L912.7,710.6 L913.3,691.7 L913.9,686.5 L914.5,682.9 L915.2,667.0 L915.8,654.9 L916.4,654.0 L917.0,636.1 L917.7,628.8 L918.3,623.7 L918.9,606.6 L919.5,594.0 L920.2,582.1 L920.8,576.0 L921.4,566.0 L922.0,565.5 L922.7,551.6 L923.3,546.1 L923.9,526.6 L924.6,535.5 L925.2,519.9 L925.8,492.9 L926.4,511.8 L927.1,496.2 L927.7,521.9 L928.3,511.2 L928.9,493.3 L929.6,528.3 L930.2,499.0 L930.8,490.2 L931.4,479.7 L932.1,516.6 L932.7,512.7 L933.3,493.8 L933.9,527.5 L934.6,519.6 L935.2,518.5 L935.8,534.3 L936.4,547.3 L937.1,548.9 L937.7,559.7 L938.3,570.7 L939.0,586.9 L939.6,589.4 L940.2,605.5 L940.8,605.3 L941.5,619.9 L942.1,630.4 L942.7,634.7 L943.3,651.6 L944.0,658.8 L944.6,675.6 L945.2,677.1 L945.8,683.5 L946.5,681.6 L947.1,707.1 L947.7,718.3 L948.3,733.9 L949.0,704.5 L949.6,717.6 L950.2,707.2 L950.8,726.4 L951.5,718.9 L952.1,754.3 L952.7,738.3 L953.4,743.1 L954.0,707.6 L954.6,719.3 L955.2,731.0 L955.9,698.2 L956.5,717.0 L957.1,698.6 L957.7,683.2 L958.4,691.2 L959.0,683.2 L959.6,666.5 L960.2,664.7 L960.9,655.0 L961.5,652.8 L962.1,632.7 L962.7,626.4 L963.4,608.0 L964.0,603.2 L964.6,593.0 L965.2,577.5 L965.9,574.8 L966.5,566.3 L967.1,564.9 L967.8,549.4 L968.4,541.5 L969.0,543.0 L969.6,532.9 L970.3,516.9 L970.9,532.2 L971.5,513.1 L972.1,504.9 L972.8,471.0 L973.4,516.4 L974.0,506.2 L974.6,522.2 L975.3,511.8 L975.9,484.9 L976.5,531.1 L977.1,521.3 L977.8,509.8 L978.4,531.7 L979.0,526.5 L979.7,528.2 L980.3,544.8 L980.9,539.9 L981.5,547.6 L982.2,550.9 L982.8,566.8 L983.4,576.9 L984.0,577.3 L984.7,590.7 L985.3,603.7 L985.9,607.9 L986.5,625.0 L987.2,630.9 L987.8,650.6 L988.4,656.0 L989.0,666.7 L989.7,679.8 L990.3,681.7 L990.9,688.6 L991.5,682.5 L992.2,712.0 L992.8,699.2 L993.4,739.1 L994.1,707.1 L994.7,724.9 L995.3,754.4 L995.9,724.6 L996.6,742.5 L997.2,761.1 L997.8,742.9 L998.4,713.6 L999.1,753.0 L999.7,706.8 L1000.3,726.2 L1000.9,730.2 L1001.6,702.5 L1002.2,712.5 L1002.8,709.6 L1003.4,692.6 L1004.1,682.0 L1004.7,679.5 L1005.3,661.2 L1005.9,656.4 L1006.6,639.0 L1007.2,636.0 L1007.8,625.9 L1008.5,620.9 L1009.1,603.8 L1009.7,596.8 L1010.3,577.0 L1011.0,576.4 L1011.6,562.0 L1012.2,549.8 L1012.8,547.8 L1013.5,538.4 L1014.1,518.3 L1014.7,533.7 L1015.3,529.2 L1016.0,529.0 L1016.6,512.1 L1017.2,506.4 L1017.8,529.6 L1018.5,517.9 L1019.1,503.5 L1019.7,475.9 L1020.3,496.8 L1021.0,502.1 L1021.6,532.9 L1022.2,494.9 L1022.9,503.5 L1023.5,532.1 L1024.1,523.4 L1024.7,526.0 L1025.4,519.5 L1026.0,538.8 L1026.6,549.0 L1027.2,563.5 L1027.9,569.4 L1028.5,574.8 L1029.1,580.6 L1029.7,597.9 L1030.4,606.5 L1031.0,610.2 L1031.6,627.4 L1032.2,639.5 L1032.9,651.4 L1033.5,655.0 L1034.1,667.7 L1034.8,680.2 L1035.4,680.1 L1036.0,689.4 L1036.6,707.5 L1037.3,714.3 L1037.9,698.5 L1038.5,696.5 L1039.1,733.6 L1039.8,709.9 L1040.4,695.3 L1041.0,742.0 L1041.6,740.9 L1042.3,761.9 L1042.9,733.7 L1043.5,734.0 L1044.1,699.1 L1044.8,714.9 L1045.4,714.8 L1046.0,688.6 L1046.6,701.0 L1047.3,698.3 L1047.9,703.7 L1048.5,689.5 L1049.2,679.9 L1049.8,664.8 L1050.4,661.6 L1051.0,651.1 L1051.7,633.9 L1052.3,630.7 L1052.9,624.0 L1053.5,604.7 L1054.2,602.3 L1054.8,591.2 L1055.4,588.0 L1056.0,574.0 L1056.7,559.3 L1057.3,560.3 L1057.9,548.8 L1058.5,535.4 L1059.2,540.3 L1059.8,524.0 L1060.4,519.7 L1061.0,493.8 L1061.7,494.5 L1062.3,509.1 L1062.9,470.6 L1063.6,501.5 L1064.2,490.2 L1064.8,531.6 L1065.4,497.8 L1066.1,498.8 L1066.7,483.7 L1067.3,499.0 L1067.9,499.4 L1068.6,495.9 L1069.2,530.2 L1069.8,522.3 L1070.4,523.6 L1071.1,544.2 L1071.7,549.3 L1072.3,552.4 L1072.9,571.5 L1073.6,578.3 L1074.2,594.6 L1074.8,599.1 L1075.4,606.3 L1076.1,624.2 L1076.7,627.4 L1077.3,636.9 L1078.0,641.6 L1078.6,657.0 L1079.2,665.2 L1079.8,681.3 L1080.5,684.6 L1081.1,696.8 L1081.7,689.1 L1082.3,708.0 L1083.0,716.0 L1083.6,734.9 L1084.2,719.0 L1084.8,730.4 L1085.5,756.1 L1086.1,718.6 L1086.7,733.7 L1087.3,701.9 L1088.0,730.3 L1088.6,730.7 L1089.2,696.9 L1089.9,721.9 L1090.5,702.8 L1091.1,689.8 L1091.7,714.8 L1092.4,706.7 L1093.0,682.3 L1093.6,685.5 L1094.2,673.6 L1094.9,659.9 L1095.5,660.2 L1096.1,648.2 L1096.7,632.1 L1097.4,628.6 L1098.0,617.4 L1098.6,601.3 L1099.2,596.2 L1099.9,591.0 L1100.5,573.8 L1101.1,566.9 L1101.7,557.0 L1102.4,544.7 L1103.0,543.3 L1103.6,539.3 L1104.3,513.9 L1104.9,512.4 L1105.5,506.6 L1106.1,485.8 L1106.8,509.7 L1107.4,493.3 L1108.0,529.0 L1108.6,502.4 L1109.3,512.8 L1109.9,519.2 L1110.5,488.9 L1111.1,514.9 L1111.8,487.0 L1112.4,515.8 L1113.0,517.8 L1113.6,502.2 L1114.3,524.4 L1114.9,530.5 L1115.5,529.1 L1116.1,543.3 L1116.8,555.1 L1117.4,557.3 L1118.0,568.1 L1118.7,582.1 L1119.3,585.4 L1119.9,598.4 L1120.5,608.5 L1121.2,626.0 L1121.8,628.1 L1122.4,639.3 L1123.0,655.8 L1123.7,657.5 L1124.3,670.2 L1124.9,673.3 L1125.5,684.9 L1126.2,691.0 L1126.8,714.9 L1127.4,713.2 L1128.0,701.1 L1128.7,741.0 L1129.3,728.3 L1129.9,714.4 L1130.5,696.6 L1131.2,721.5 L1131.8,743.8 L1132.4,704.7 L1133.1,741.1 L1133.7,714.2 L1134.3,751.3 L1134.9,730.1 L1135.6,725.2 L1136.2,729.2 L1136.8,709.3 L1137.4,702.2 L1138.1,701.1 L1138.7,685.2 L1139.3,676.2 L1139.9,672.9 L1140.6,658.3 L1141.2,646.0 L1141.8,643.4 L1142.4,630.3 L1143.1,613.9 L1143.7,613.4 L1144.3,600.3 L1145.0,586.2 L1145.6,570.7 L1146.2,568.3 L1146.8,558.1 L1147.5,555.6 L1148.1,539.4 L1148.7,537.9 L1149.3,511.1 L1150.0,531.7 L1150.6,507.5 L1151.2,538.0 L1151.8,521.5 L1152.5,504.4 L1153.1,482.4 L1153.7,484.7 L1154.3,515.1 L1155.0,526.3 L1155.6,494.7 L1156.2,507.0 L1156.8,477.0 L1157.5,508.1 L1158.1,513.0 L1158.7,537.4 L1159.4,518.8 L1160.0,537.5 L1160.6,530.8 L1161.2,546.9 L1161.9,552.9 L1162.5,569.4 L1163.1,572.8 L1163.7,580.1 L1164.4,587.1 L1165.0,604.9 L1165.6,609.3 L1166.2,629.6 L1166.9,630.2 L1167.5,645.3 L1168.1,659.4 L1168.7,661.2 L1169.4,668.8 L1170.0,672.5 L1170.6,684.2 L1171.2,702.3 L1171.9,720.2 L1172.5,706.9 L1173.1,712.9 L1173.8,742.1 L1174.4,737.4 L1175.0,728.5 L1175.6,697.6 L1176.3,720.8 L1176.9,719.7 L1177.5,709.6 L1178.1,716.9 L1178.8,738.0 L1179.4,703.2 L1180.0,719.8 L1180.6,710.7 L1181.3,696.5 L1181.9,705.4 L1182.5,699.0 L1183.1,699.2 L1183.8,678.0 L1184.4,675.7 L1185.0,669.0 L1185.6,654.9 L1186.3,643.1 L1186.9,639.6 L1187.5,625.7 L1188.2,614.7 L1188.8,610.7 L1189.4,596.2 L1190.0,585.4 L1190.7,583.3 L1191.3,564.4 L1191.9,555.1 L1192.5,553.8 L1193.2,544.2 L1193.8,527.2 L1194.4,511.3 L1195.0,509.3 L1195.7,517.9 L1196.3,481.8 L1196.9,491.6 L1197.5,512.4 L1198.2,524.8 L1198.8,493.4 L1199.4,515.1 L1200.1,471.5 L1200.7,485.4 L1201.3,489.1 L1201.9,528.7 L1202.6,512.8 L1203.2,504.8 L1203.8,503.4 L1204.4,534.8 L1205.1,534.0 L1205.7,547.1 L1206.3,547.9 L1206.9,559.4 L1207.6,571.9 L1208.2,574.5 L1208.8,583.0 L1209.4,588.6 L1210.1,601.2 L1210.7,613.6 L1211.3,619.8 L1211.9,636.0 L1212.6,648.2 L1213.2,648.8 L1213.8,665.7 L1214.5,676.6 L1215.1,688.8 L1215.7,689.3 L1216.3,695.8 L1217.0,716.7 L1217.6,713.2 L1218.2,724.8 L1218.8,702.3 L1219.5,732.2 L1220.1,714.6 L1220.7,747.4 L1221.3,736.5 L1222.0,734.5 L1222.6,761.6 L1223.2,732.5 L1223.8,734.4 L1224.5,743.5 L1225.1,715.5 L1225.7,714.3 L1226.3,722.2 L1227.0,700.4 L1227.6,702.2 L1228.2,680.1 L1228.9,679.7 L1229.5,669.5 L1230.1,656.2 L1230.7,652.9 L1231.4,643.7 L1232.0,640.5 L1232.6,622.6 L1233.2,613.1 L1233.9,608.5 L1234.5,589.8 L1235.1,584.7 L1235.7,567.2 L1236.4,562.9 L1237.0,557.6 L1237.6,553.7 L1238.2,538.7 L1238.9,539.1 L1239.5,507.6 L1240.1,529.1 L1240.7,503.2 L1241.4,484.0 L1242.0,489.6 L1242.6,489.0 L1243.3,530.4" stroke="#3eacdf" stroke-width="6" fill="none" filter="url(#bl)" stroke-linejoin="round" opacity="0.6"/><path d="M617.7,478.0 L618.4,499.7 L619.0,507.7 L619.6,503.8 L620.3,525.5 L620.9,538.7 L621.5,533.4 L622.1,547.7 L622.8,561.6 L623.4,562.6 L624.0,576.8 L624.6,583.9 L625.3,603.5 L625.9,607.6 L626.5,617.3 L627.1,633.9 L627.8,634.6 L628.4,650.2 L629.0,661.8 L629.6,667.7 L630.3,678.2 L630.9,677.3 L631.5,689.9 L632.1,703.4 L632.8,721.9 L633.4,710.9 L634.0,711.5 L634.7,696.0 L635.3,727.3 L635.9,725.2 L636.5,758.3 L637.2,736.9 L637.8,740.3 L638.4,710.2 L639.0,725.6 L639.7,738.8 L640.3,749.8 L640.9,721.3 L641.5,700.9 L642.2,721.2 L642.8,693.0 L643.4,700.0 L644.0,676.7 L644.7,678.7 L645.3,672.4 L645.9,667.5 L646.5,652.3 L647.2,644.0 L647.8,626.3 L648.4,621.5 L649.1,607.5 L649.7,606.0 L650.3,593.6 L650.9,584.1 L651.6,566.0 L652.2,561.5 L652.8,553.5 L653.4,553.0 L654.1,533.6 L654.7,531.1 L655.3,510.8 L655.9,519.3 L656.6,520.4 L657.2,480.3 L657.8,488.1 L658.4,498.2 L659.1,521.5 L659.7,502.7 L660.3,485.4 L660.9,518.8 L661.6,513.8 L662.2,505.7 L662.8,533.7 L663.5,516.3 L664.1,521.7 L664.7,534.5 L665.3,533.9 L666.0,533.9 L666.6,550.9 L667.2,552.7 L667.8,560.9 L668.5,562.1 L669.1,581.9 L669.7,589.8 L670.3,604.6 L671.0,611.1 L671.6,618.3 L672.2,634.4 L672.8,638.3 L673.5,648.6 L674.1,650.8 L674.7,667.0 L675.3,677.1 L676.0,690.1 L676.6,692.4 L677.2,704.1 L677.9,692.3 L678.5,703.7 L679.1,714.4 L679.7,698.3 L680.4,710.3 L681.0,710.4 L681.6,751.4 L682.2,727.9 L682.9,716.9 L683.5,752.1 L684.1,712.5 L684.7,734.8 L685.4,738.3 L686.0,719.5 L686.6,718.2 L687.2,719.0 L687.9,701.7 L688.5,691.3 L689.1,689.5 L689.8,678.8 L690.4,667.7 L691.0,651.1 L691.6,647.1 L692.3,638.1 L692.9,635.5 L693.5,615.5 L694.1,608.7 L694.8,591.3 L695.4,585.0 L696.0,582.3 L696.6,575.5 L697.3,558.3 L697.9,552.7 L698.5,548.5 L699.1,534.7 L699.8,523.9 L700.4,541.2 L701.0,505.2 L701.6,515.5 L702.3,478.5 L702.9,490.8 L703.5,504.0 L704.2,531.3 L704.8,495.9 L705.4,494.1 L706.0,475.4 L706.7,518.9 L707.3,518.8 L707.9,532.4 L708.5,498.3 L709.2,508.0 L709.8,508.7 L710.4,526.1 L711.0,536.4 L711.7,539.0 L712.3,553.3 L712.9,562.3 L713.5,577.4 L714.2,584.4 L714.8,594.7 L715.4,607.5 L716.0,610.4 L716.7,618.2 L717.3,623.6 L717.9,642.4 L718.6,653.8 L719.2,667.0 L719.8,667.8 L720.4,679.5 L721.1,679.0 L721.7,697.9 L722.3,703.0 L722.9,693.7 L723.6,715.1 L724.2,709.1 L724.8,750.6 L725.4,729.5 L726.1,724.9 L726.7,707.5 L727.3,743.9 L727.9,735.5 L728.6,758.2 L729.2,711.0 L729.8,731.5 L730.4,737.7 L731.1,716.7 L731.7,700.1 L732.3,690.2 L733.0,697.6 L733.6,688.5 L734.2,676.9 L734.8,671.8 L735.5,667.0 L736.1,663.1 L736.7,648.1 L737.3,637.7 L738.0,633.5 L738.6,617.2 L739.2,608.6 L739.8,590.8 L740.5,589.0 L741.1,580.0 L741.7,573.4 L742.3,557.1 L743.0,548.3 L743.6,531.3 L744.2,531.1 L744.9,532.6 L745.5,505.8 L746.1,509.2 L746.7,502.5 L747.4,525.2 L748.0,510.8 L748.6,506.2 L749.2,524.0 L749.9,487.6 L750.5,483.7 L751.1,524.8 L751.7,488.3 L752.4,508.8 L753.0,487.2 L753.6,509.9 L754.2,508.8 L754.9,509.2 L755.5,529.2 L756.1,539.0 L756.7,540.7 L757.4,554.3 L758.0,566.6 L758.6,579.1 L759.3,580.4 L759.9,589.6 L760.5,596.8 L761.1,611.2 L761.8,624.9 L762.4,639.4 L763.0,646.6 L763.6,653.6 L764.3,655.2 L764.9,671.7 L765.5,683.7 L766.1,696.2 L766.8,702.8 L767.4,702.0 L768.0,726.0 L768.6,700.8 L769.3,707.0 L769.9,693.3 L770.5,726.4 L771.1,712.0 L771.8,760.2 L772.4,732.5 L773.0,727.6 L773.7,754.8 L774.3,714.3 L774.9,721.3 L775.5,695.3 L776.2,702.3 L776.8,700.5 L777.4,716.4 L778.0,702.0 L778.7,688.4 L779.3,674.2 L779.9,674.6 L780.5,663.1 L781.2,660.8 L781.8,647.9 L782.4,630.9 L783.0,617.8 L783.7,610.6 L784.3,607.0 L784.9,601.2 L785.5,587.5 L786.2,574.3 L786.8,557.2 L787.4,554.0 L788.1,548.4 L788.7,548.2 L789.3,538.1 L789.9,526.7 L790.6,501.4 L791.2,524.6 L791.8,511.7 L792.4,535.0 L793.1,515.3 L793.7,490.1 L794.3,518.3 L794.9,511.5 L795.6,517.2 L796.2,477.2 L796.8,507.7 L797.4,501.9 L798.1,531.6 L798.7,512.3 L799.3,511.7 L800.0,509.8 L800.6,530.1 L801.2,536.8 L801.8,554.7 L802.5,558.0 L803.1,566.2 L803.7,582.3 L804.3,582.8 L805.0,595.1 L805.6,612.0 L806.2,613.0 L806.8,624.9 L807.5,641.1 L808.1,643.8 L808.7,652.9 L809.3,670.3 L810.0,674.9 L810.6,678.8 L811.2,700.4 L811.8,702.3 L812.5,712.4 L813.1,724.2 L813.7,727.0 L814.4,723.5 L815.0,695.2 L815.6,729.4 L816.2,718.1 L816.9,751.9 L817.5,725.4 L818.1,718.5 L818.7,749.4 L819.4,719.4 L820.0,709.2 L820.6,701.7 L821.2,713.5 L821.9,702.1 L822.5,718.6 L823.1,695.1 L823.7,691.8 L824.4,674.0 L825.0,672.8 L825.6,663.6 L826.2,660.1 L826.9,639.0 L827.5,635.3 L828.1,627.2 L828.8,610.7 L829.4,605.1 L830.0,597.7 L830.6,582.4 L831.3,572.4 L831.9,557.9 L832.5,555.3 L833.1,544.9 L833.8,549.3 L834.4,536.0 L835.0,525.0 L835.6,500.8 L836.3,521.4 L836.9,518.8 L837.5,526.2 L838.1,516.5 L838.8,487.4 L839.4,471.1 L840.0,510.2 L840.6,496.2 L841.3,470.6 L841.9,511.6 L842.5,493.3 L843.2,536.0 L843.8,518.1 L844.4,512.3 L845.0,511.6 L845.7,531.0 L846.3,543.2 L846.9,555.4 L847.5,560.5 L848.2,568.6 L848.8,585.7 L849.4,583.9 L850.0,594.5 L850.7,613.0 L851.3,614.4 L851.9,626.6 L852.5,632.5 L853.2,648.4 L853.8,659.7 L854.4,672.5 L855.1,671.6 L855.7,682.7 L856.3,702.8 L856.9,690.6 L857.6,715.7 L858.2,732.3 L858.8,723.5 L859.4,724.0 L860.1,752.3 L860.7,721.9 L861.3,747.0 L861.9,707.2 L862.6,714.9 L863.2,727.5 L863.8,695.1 L864.4,722.8 L865.1,705.9 L865.7,692.6 L866.3,723.6 L866.9,704.6 L867.6,713.1 L868.2,687.3 L868.8,686.5 L869.5,685.0 L870.1,668.2 L870.7,658.6 L871.3,641.8 L872.0,640.7 L872.6,629.9 L873.2,614.1 L873.8,611.5 L874.5,598.6 L875.1,582.8 L875.7,578.2 L876.3,574.0 L877.0,568.0 L877.6,551.5 L878.2,544.9 L878.8,528.9 L879.5,532.5 L880.1,524.9 L880.7,502.8 L881.3,500.0 L882.0,509.7 L882.6,483.1 L883.2,492.2 L883.9,516.3 L884.5,532.1 L885.1,490.3 L885.7,500.7 L886.4,528.4 L887.0,517.0 L887.6,503.5 L888.2,495.4 L888.9,507.5 L889.5,525.8 L890.1,539.5 L890.7,537.1 L891.4,542.8 L892.0,545.7 L892.6,560.2 L893.2,569.0 L893.9,572.5 L894.5,589.5 L895.1,596.0 L895.7,602.6 L896.4,621.9 L897.0,632.9 L897.6,632.6 L898.3,648.9 L898.9,660.4 L899.5,661.7 L900.1,675.5 L900.8,683.8 L901.4,704.5 L902.0,695.7 L902.6,713.7 L903.3,731.5 L903.9,713.0 L904.5,731.5 L905.1,751.4 L905.8,745.2 L906.4,738.2 L907.0,758.7 L907.6,744.9 L908.3,727.5 L908.9,756.4 L909.5,710.5 L910.2,731.6 L910.8,738.8 L911.4,714.6 L912.0,705.9 L912.7,710.6 L913.3,691.7 L913.9,686.5 L914.5,682.9 L915.2,667.0 L915.8,654.9 L916.4,654.0 L917.0,636.1 L917.7,628.8 L918.3,623.7 L918.9,606.6 L919.5,594.0 L920.2,582.1 L920.8,576.0 L921.4,566.0 L922.0,565.5 L922.7,551.6 L923.3,546.1 L923.9,526.6 L924.6,535.5 L925.2,519.9 L925.8,492.9 L926.4,511.8 L927.1,496.2 L927.7,521.9 L928.3,511.2 L928.9,493.3 L929.6,528.3 L930.2,499.0 L930.8,490.2 L931.4,479.7 L932.1,516.6 L932.7,512.7 L933.3,493.8 L933.9,527.5 L934.6,519.6 L935.2,518.5 L935.8,534.3 L936.4,547.3 L937.1,548.9 L937.7,559.7 L938.3,570.7 L939.0,586.9 L939.6,589.4 L940.2,605.5 L940.8,605.3 L941.5,619.9 L942.1,630.4 L942.7,634.7 L943.3,651.6 L944.0,658.8 L944.6,675.6 L945.2,677.1 L945.8,683.5 L946.5,681.6 L947.1,707.1 L947.7,718.3 L948.3,733.9 L949.0,704.5 L949.6,717.6 L950.2,707.2 L950.8,726.4 L951.5,718.9 L952.1,754.3 L952.7,738.3 L953.4,743.1 L954.0,707.6 L954.6,719.3 L955.2,731.0 L955.9,698.2 L956.5,717.0 L957.1,698.6 L957.7,683.2 L958.4,691.2 L959.0,683.2 L959.6,666.5 L960.2,664.7 L960.9,655.0 L961.5,652.8 L962.1,632.7 L962.7,626.4 L963.4,608.0 L964.0,603.2 L964.6,593.0 L965.2,577.5 L965.9,574.8 L966.5,566.3 L967.1,564.9 L967.8,549.4 L968.4,541.5 L969.0,543.0 L969.6,532.9 L970.3,516.9 L970.9,532.2 L971.5,513.1 L972.1,504.9 L972.8,471.0 L973.4,516.4 L974.0,506.2 L974.6,522.2 L975.3,511.8 L975.9,484.9 L976.5,531.1 L977.1,521.3 L977.8,509.8 L978.4,531.7 L979.0,526.5 L979.7,528.2 L980.3,544.8 L980.9,539.9 L981.5,547.6 L982.2,550.9 L982.8,566.8 L983.4,576.9 L984.0,577.3 L984.7,590.7 L985.3,603.7 L985.9,607.9 L986.5,625.0 L987.2,630.9 L987.8,650.6 L988.4,656.0 L989.0,666.7 L989.7,679.8 L990.3,681.7 L990.9,688.6 L991.5,682.5 L992.2,712.0 L992.8,699.2 L993.4,739.1 L994.1,707.1 L994.7,724.9 L995.3,754.4 L995.9,724.6 L996.6,742.5 L997.2,761.1 L997.8,742.9 L998.4,713.6 L999.1,753.0 L999.7,706.8 L1000.3,726.2 L1000.9,730.2 L1001.6,702.5 L1002.2,712.5 L1002.8,709.6 L1003.4,692.6 L1004.1,682.0 L1004.7,679.5 L1005.3,661.2 L1005.9,656.4 L1006.6,639.0 L1007.2,636.0 L1007.8,625.9 L1008.5,620.9 L1009.1,603.8 L1009.7,596.8 L1010.3,577.0 L1011.0,576.4 L1011.6,562.0 L1012.2,549.8 L1012.8,547.8 L1013.5,538.4 L1014.1,518.3 L1014.7,533.7 L1015.3,529.2 L1016.0,529.0 L1016.6,512.1 L1017.2,506.4 L1017.8,529.6 L1018.5,517.9 L1019.1,503.5 L1019.7,475.9 L1020.3,496.8 L1021.0,502.1 L1021.6,532.9 L1022.2,494.9 L1022.9,503.5 L1023.5,532.1 L1024.1,523.4 L1024.7,526.0 L1025.4,519.5 L1026.0,538.8 L1026.6,549.0 L1027.2,563.5 L1027.9,569.4 L1028.5,574.8 L1029.1,580.6 L1029.7,597.9 L1030.4,606.5 L1031.0,610.2 L1031.6,627.4 L1032.2,639.5 L1032.9,651.4 L1033.5,655.0 L1034.1,667.7 L1034.8,680.2 L1035.4,680.1 L1036.0,689.4 L1036.6,707.5 L1037.3,714.3 L1037.9,698.5 L1038.5,696.5 L1039.1,733.6 L1039.8,709.9 L1040.4,695.3 L1041.0,742.0 L1041.6,740.9 L1042.3,761.9 L1042.9,733.7 L1043.5,734.0 L1044.1,699.1 L1044.8,714.9 L1045.4,714.8 L1046.0,688.6 L1046.6,701.0 L1047.3,698.3 L1047.9,703.7 L1048.5,689.5 L1049.2,679.9 L1049.8,664.8 L1050.4,661.6 L1051.0,651.1 L1051.7,633.9 L1052.3,630.7 L1052.9,624.0 L1053.5,604.7 L1054.2,602.3 L1054.8,591.2 L1055.4,588.0 L1056.0,574.0 L1056.7,559.3 L1057.3,560.3 L1057.9,548.8 L1058.5,535.4 L1059.2,540.3 L1059.8,524.0 L1060.4,519.7 L1061.0,493.8 L1061.7,494.5 L1062.3,509.1 L1062.9,470.6 L1063.6,501.5 L1064.2,490.2 L1064.8,531.6 L1065.4,497.8 L1066.1,498.8 L1066.7,483.7 L1067.3,499.0 L1067.9,499.4 L1068.6,495.9 L1069.2,530.2 L1069.8,522.3 L1070.4,523.6 L1071.1,544.2 L1071.7,549.3 L1072.3,552.4 L1072.9,571.5 L1073.6,578.3 L1074.2,594.6 L1074.8,599.1 L1075.4,606.3 L1076.1,624.2 L1076.7,627.4 L1077.3,636.9 L1078.0,641.6 L1078.6,657.0 L1079.2,665.2 L1079.8,681.3 L1080.5,684.6 L1081.1,696.8 L1081.7,689.1 L1082.3,708.0 L1083.0,716.0 L1083.6,734.9 L1084.2,719.0 L1084.8,730.4 L1085.5,756.1 L1086.1,718.6 L1086.7,733.7 L1087.3,701.9 L1088.0,730.3 L1088.6,730.7 L1089.2,696.9 L1089.9,721.9 L1090.5,702.8 L1091.1,689.8 L1091.7,714.8 L1092.4,706.7 L1093.0,682.3 L1093.6,685.5 L1094.2,673.6 L1094.9,659.9 L1095.5,660.2 L1096.1,648.2 L1096.7,632.1 L1097.4,628.6 L1098.0,617.4 L1098.6,601.3 L1099.2,596.2 L1099.9,591.0 L1100.5,573.8 L1101.1,566.9 L1101.7,557.0 L1102.4,544.7 L1103.0,543.3 L1103.6,539.3 L1104.3,513.9 L1104.9,512.4 L1105.5,506.6 L1106.1,485.8 L1106.8,509.7 L1107.4,493.3 L1108.0,529.0 L1108.6,502.4 L1109.3,512.8 L1109.9,519.2 L1110.5,488.9 L1111.1,514.9 L1111.8,487.0 L1112.4,515.8 L1113.0,517.8 L1113.6,502.2 L1114.3,524.4 L1114.9,530.5 L1115.5,529.1 L1116.1,543.3 L1116.8,555.1 L1117.4,557.3 L1118.0,568.1 L1118.7,582.1 L1119.3,585.4 L1119.9,598.4 L1120.5,608.5 L1121.2,626.0 L1121.8,628.1 L1122.4,639.3 L1123.0,655.8 L1123.7,657.5 L1124.3,670.2 L1124.9,673.3 L1125.5,684.9 L1126.2,691.0 L1126.8,714.9 L1127.4,713.2 L1128.0,701.1 L1128.7,741.0 L1129.3,728.3 L1129.9,714.4 L1130.5,696.6 L1131.2,721.5 L1131.8,743.8 L1132.4,704.7 L1133.1,741.1 L1133.7,714.2 L1134.3,751.3 L1134.9,730.1 L1135.6,725.2 L1136.2,729.2 L1136.8,709.3 L1137.4,702.2 L1138.1,701.1 L1138.7,685.2 L1139.3,676.2 L1139.9,672.9 L1140.6,658.3 L1141.2,646.0 L1141.8,643.4 L1142.4,630.3 L1143.1,613.9 L1143.7,613.4 L1144.3,600.3 L1145.0,586.2 L1145.6,570.7 L1146.2,568.3 L1146.8,558.1 L1147.5,555.6 L1148.1,539.4 L1148.7,537.9 L1149.3,511.1 L1150.0,531.7 L1150.6,507.5 L1151.2,538.0 L1151.8,521.5 L1152.5,504.4 L1153.1,482.4 L1153.7,484.7 L1154.3,515.1 L1155.0,526.3 L1155.6,494.7 L1156.2,507.0 L1156.8,477.0 L1157.5,508.1 L1158.1,513.0 L1158.7,537.4 L1159.4,518.8 L1160.0,537.5 L1160.6,530.8 L1161.2,546.9 L1161.9,552.9 L1162.5,569.4 L1163.1,572.8 L1163.7,580.1 L1164.4,587.1 L1165.0,604.9 L1165.6,609.3 L1166.2,629.6 L1166.9,630.2 L1167.5,645.3 L1168.1,659.4 L1168.7,661.2 L1169.4,668.8 L1170.0,672.5 L1170.6,684.2 L1171.2,702.3 L1171.9,720.2 L1172.5,706.9 L1173.1,712.9 L1173.8,742.1 L1174.4,737.4 L1175.0,728.5 L1175.6,697.6 L1176.3,720.8 L1176.9,719.7 L1177.5,709.6 L1178.1,716.9 L1178.8,738.0 L1179.4,703.2 L1180.0,719.8 L1180.6,710.7 L1181.3,696.5 L1181.9,705.4 L1182.5,699.0 L1183.1,699.2 L1183.8,678.0 L1184.4,675.7 L1185.0,669.0 L1185.6,654.9 L1186.3,643.1 L1186.9,639.6 L1187.5,625.7 L1188.2,614.7 L1188.8,610.7 L1189.4,596.2 L1190.0,585.4 L1190.7,583.3 L1191.3,564.4 L1191.9,555.1 L1192.5,553.8 L1193.2,544.2 L1193.8,527.2 L1194.4,511.3 L1195.0,509.3 L1195.7,517.9 L1196.3,481.8 L1196.9,491.6 L1197.5,512.4 L1198.2,524.8 L1198.8,493.4 L1199.4,515.1 L1200.1,471.5 L1200.7,485.4 L1201.3,489.1 L1201.9,528.7 L1202.6,512.8 L1203.2,504.8 L1203.8,503.4 L1204.4,534.8 L1205.1,534.0 L1205.7,547.1 L1206.3,547.9 L1206.9,559.4 L1207.6,571.9 L1208.2,574.5 L1208.8,583.0 L1209.4,588.6 L1210.1,601.2 L1210.7,613.6 L1211.3,619.8 L1211.9,636.0 L1212.6,648.2 L1213.2,648.8 L1213.8,665.7 L1214.5,676.6 L1215.1,688.8 L1215.7,689.3 L1216.3,695.8 L1217.0,716.7 L1217.6,713.2 L1218.2,724.8 L1218.8,702.3 L1219.5,732.2 L1220.1,714.6 L1220.7,747.4 L1221.3,736.5 L1222.0,734.5 L1222.6,761.6 L1223.2,732.5 L1223.8,734.4 L1224.5,743.5 L1225.1,715.5 L1225.7,714.3 L1226.3,722.2 L1227.0,700.4 L1227.6,702.2 L1228.2,680.1 L1228.9,679.7 L1229.5,669.5 L1230.1,656.2 L1230.7,652.9 L1231.4,643.7 L1232.0,640.5 L1232.6,622.6 L1233.2,613.1 L1233.9,608.5 L1234.5,589.8 L1235.1,584.7 L1235.7,567.2 L1236.4,562.9 L1237.0,557.6 L1237.6,553.7 L1238.2,538.7 L1238.9,539.1 L1239.5,507.6 L1240.1,529.1 L1240.7,503.2 L1241.4,484.0 L1242.0,489.6 L1242.6,489.0 L1243.3,530.4" stroke="#4f9e86" stroke-width="2.6" fill="none" stroke-linejoin="miter"/><path d="M617.7,492.2 L618.4,505.0 L619.0,511.5 L619.6,512.3 L620.3,526.3 M632.8,713.4 L633.4,710.9 L634.0,713.8 L634.7,708.3 L635.3,725.8 L635.9,726.1 L636.5,743.6 L637.2,733.4 L637.8,735.2 L638.4,719.8 L639.0,726.7 L639.7,732.1 L640.3,735.9 L640.9,719.6 L641.5,706.9 L642.2,714.2 L642.8,696.9 M655.3,516.9 L655.9,518.3 L656.6,516.2 L657.2,494.0 L657.8,496.2 L658.4,499.9 L659.1,510.6 L659.7,500.7 L660.3,492.0 L660.9,509.1 L661.6,507.5 L662.2,504.7 L662.8,520.4 L663.5,513.8 L664.1,519.0 L664.7,528.3 L665.3,531.2 M677.9,699.3 L678.5,707.9 L679.1,715.8 L679.7,709.9 L680.4,717.6 L681.0,719.0 L681.6,740.3 L682.2,729.0 L682.9,723.5 L683.5,740.6 L684.1,719.9 L684.7,729.7 L685.4,729.8 L686.0,718.2 L686.6,715.0 L687.2,712.5 M699.8,526.1 L700.4,531.5 L701.0,510.7 L701.6,513.3 L702.3,492.7 L702.9,497.2 L703.5,502.5 L704.2,515.4 L704.8,497.3 L705.4,496.4 L706.0,487.6 L706.7,510.3 L707.3,511.6 L707.9,520.2 L708.5,505.3 L709.2,512.8 L709.8,516.1 M722.3,702.1 L722.9,700.7 L723.6,714.2 L724.2,713.6 L724.8,736.4 L725.4,727.5 L726.1,726.4 L726.7,718.5 L727.3,737.0 L727.9,732.7 L728.6,743.5 L729.2,718.9 L729.8,727.8 L730.4,729.0 L731.1,716.3 L731.7,705.3 L732.3,697.4 M744.9,529.7 L745.5,513.2 L746.1,512.1 L746.7,506.3 L747.4,515.6 L748.0,506.9 L748.6,503.4 L749.2,511.6 L749.9,493.1 L750.5,491.3 L751.1,512.4 L751.7,495.3 L752.4,506.9 L753.0,498.0 L753.6,511.7 L754.2,513.8 L754.9,517.0 M767.4,702.3 L768.0,717.4 L768.6,707.6 L769.3,713.0 L769.9,708.2 L770.5,726.2 L771.1,720.2 L771.8,745.0 L772.4,731.3 L773.0,728.7 L773.7,741.7 L774.3,720.3 L774.9,722.3 L775.5,707.4 L776.2,708.5 L776.8,704.9 L777.4,709.8 M789.9,526.1 L790.6,510.3 L791.2,519.2 L791.8,510.4 L792.4,520.2 L793.1,508.9 L793.7,495.1 L794.3,508.7 L794.9,505.0 L795.6,508.1 L796.2,488.8 L796.8,505.2 L797.4,503.9 L798.1,520.7 L798.7,513.4 L799.3,515.9 L800.0,518.0 M812.5,708.2 L813.1,717.2 L813.7,721.2 L814.4,721.7 L815.0,709.5 L815.6,728.0 L816.2,723.4 L816.9,740.9 L817.5,727.8 L818.1,724.0 L818.7,738.8 L819.4,722.6 L820.0,715.9 L820.6,710.1 L821.2,713.6 L821.9,705.1 L822.5,710.2 M835.0,524.5 L835.6,509.4 L836.3,517.1 L836.9,513.5 L837.5,515.4 L838.1,509.2 L838.8,493.6 L839.4,484.9 L840.0,504.4 L840.6,497.7 L841.3,485.7 L841.9,507.5 L842.5,500.0 L843.2,523.4 L843.8,516.9 L844.4,516.8 L845.0,519.6 M857.6,710.5 L858.2,721.8 L858.8,720.0 L859.4,722.4 L860.1,738.4 L860.7,724.6 L861.3,738.0 L861.9,718.6 L862.6,722.5 L863.2,728.4 L863.8,711.4 L864.4,724.0 L865.1,713.8 L865.7,705.1 L866.3,718.1 L866.9,705.7 L867.6,706.7 M880.1,523.8 L880.7,509.8 L881.3,505.9 L882.0,508.6 L882.6,493.6 L883.2,496.8 L883.9,507.9 L884.5,515.4 L885.1,494.5 L885.7,500.1 L886.4,514.8 L887.0,510.5 L887.6,505.4 L888.2,503.6 L888.9,512.2 L889.5,524.2 M902.0,698.0 L902.6,710.2 L903.3,722.0 L903.9,715.3 L904.5,726.6 L905.1,738.3 L905.8,736.4 L906.4,733.8 L907.0,744.4 L907.6,737.5 L908.3,728.3 L908.9,741.8 L909.5,717.5 L910.2,726.3 L910.8,727.7 L911.4,713.0 L912.0,705.7 M924.6,531.6 L925.2,520.6 L925.8,504.3 L926.4,511.3 L927.1,501.4 L927.7,512.6 L928.3,506.0 L928.9,496.3 L929.6,513.5 L930.2,498.9 L930.8,495.0 L931.4,490.8 L932.1,510.6 L932.7,510.5 L933.3,503.3 L933.9,522.7 L934.6,521.8 M947.1,704.4 L947.7,713.2 L948.3,723.8 L949.0,711.5 L949.6,720.1 L950.2,716.5 L950.8,727.2 L951.5,724.2 L952.1,742.3 L952.7,734.1 L953.4,735.9 L954.0,717.1 L954.6,721.5 L955.2,725.5 L955.9,706.9 L956.5,713.6 L957.1,701.4 M969.6,529.6 L970.3,518.5 L970.9,523.4 L971.5,511.5 L972.1,505.4 L972.8,486.9 L973.4,508.5 L974.0,502.6 L974.6,510.4 L975.3,505.4 L975.9,492.6 L976.5,516.7 L977.1,513.3 L977.8,509.5 L978.4,522.7 L979.0,522.9 L979.7,526.8 M992.2,707.6 L992.8,704.2 L993.4,726.9 L994.1,713.2 L994.7,724.1 L995.3,740.4 L995.9,726.6 L996.6,736.2 L997.2,745.7 L997.8,736.3 L998.4,721.0 L999.1,739.6 L999.7,714.9 L1000.3,722.7 L1000.9,722.3 L1001.6,705.7 L1002.2,707.6 M1014.7,529.3 L1015.3,524.0 L1016.0,521.2 L1016.6,510.5 L1017.2,505.7 L1017.8,515.9 L1018.5,509.0 L1019.1,501.2 L1019.7,487.3 L1020.3,498.0 L1021.0,501.4 L1021.6,517.9 L1022.2,500.5 L1022.9,506.8 L1023.5,523.5 L1024.1,521.9 L1024.7,526.4 M1037.3,709.4 L1037.9,704.5 L1038.5,706.2 L1039.1,727.0 L1039.8,717.0 L1040.4,711.1 L1041.0,735.4 L1041.6,735.4 L1042.3,746.0 L1042.9,731.6 L1043.5,731.0 L1044.1,712.3 L1044.8,718.6 L1045.4,716.5 L1046.0,700.9 L1046.6,704.3 L1047.3,699.8 M1059.8,523.8 L1060.4,518.6 L1061.0,503.1 L1061.7,501.3 L1062.3,506.7 L1062.9,486.1 L1063.6,500.6 L1064.2,494.5 L1064.8,515.1 L1065.4,498.6 L1066.1,499.9 L1066.7,493.6 L1067.3,503.0 L1067.9,505.2 L1068.6,506.0 L1069.2,526.0 L1069.8,525.2 M1082.3,706.9 L1083.0,713.9 L1083.6,725.9 L1084.2,720.1 L1084.8,727.5 L1085.5,741.7 L1086.1,723.9 L1086.7,731.9 L1087.3,716.0 L1088.0,729.8 L1088.6,729.1 L1089.2,710.9 L1089.9,721.7 L1090.5,710.0 L1091.1,701.0 L1091.7,710.5 M1104.3,521.3 L1104.9,517.3 L1105.5,511.5 L1106.1,498.6 L1106.8,508.4 L1107.4,498.5 L1108.0,515.1 L1108.6,500.9 L1109.3,505.7 L1109.9,508.9 L1110.5,494.3 L1111.1,508.2 L1111.8,495.6 L1112.4,511.8 L1113.0,515.0 L1113.6,509.7 L1114.3,523.7 M1126.8,707.9 L1127.4,710.2 L1128.0,707.0 L1128.7,729.5 L1129.3,725.1 L1129.9,719.9 L1130.5,712.2 L1131.2,725.5 L1131.8,737.0 L1132.4,717.3 L1133.1,735.0 L1133.7,720.6 L1134.3,737.8 L1134.9,725.3 L1135.6,720.7 L1136.2,720.1 L1136.8,707.1 M1149.3,519.2 L1150.0,526.3 L1150.6,511.4 L1151.2,524.2 L1151.8,513.9 L1152.5,503.8 L1153.1,491.6 L1153.7,492.0 L1154.3,506.8 L1155.0,512.6 L1155.6,497.3 L1156.2,504.5 L1156.8,490.9 L1157.5,508.3 L1158.1,513.0 L1158.7,527.9 L1159.4,521.7 M1171.9,711.2 L1172.5,707.7 L1173.1,713.5 L1173.8,730.5 L1174.4,730.1 L1175.0,727.2 L1175.6,712.9 L1176.3,725.2 L1176.9,724.9 L1177.5,719.7 L1178.1,722.8 L1178.8,732.2 L1179.4,713.4 L1180.0,719.8 L1180.6,712.9 L1181.3,703.1 L1181.9,704.5 M1194.4,518.6 L1195.0,514.4 L1195.7,516.0 L1196.3,495.6 L1196.9,498.6 L1197.5,507.4 L1198.2,512.6 L1198.8,496.2 L1199.4,506.8 L1200.1,485.2 L1200.7,492.9 L1201.3,495.8 L1201.9,517.2 L1202.6,511.1 L1203.2,509.5 L1203.8,511.6 L1204.4,530.3 M1217.0,710.2 L1217.6,711.5 L1218.2,720.0 L1218.8,711.0 L1219.5,727.9 L1220.1,720.6 L1220.7,738.0 L1221.3,733.2 L1222.0,732.4 L1222.6,745.6 L1223.2,730.4 L1223.8,730.1 L1224.5,733.2 L1225.1,717.2 L1225.7,714.2 L1226.3,715.3 L1227.0,701.3 M1239.5,516.0 L1240.1,523.7 L1240.7,508.1 L1241.4,496.3 L1242.0,497.2 L1242.6,495.5 L1243.3,515.2" stroke="#42aadb" stroke-width="4.2" fill="none" filter="url(#bl)" stroke-linejoin="round" opacity="0.95"/><path d="M617.7,492.2 L618.4,505.0 L619.0,511.5 L619.6,512.3 L620.3,526.3 M632.8,713.4 L633.4,710.9 L634.0,713.8 L634.7,708.3 L635.3,725.8 L635.9,726.1 L636.5,743.6 L637.2,733.4 L637.8,735.2 L638.4,719.8 L639.0,726.7 L639.7,732.1 L640.3,735.9 L640.9,719.6 L641.5,706.9 L642.2,714.2 L642.8,696.9 M655.3,516.9 L655.9,518.3 L656.6,516.2 L657.2,494.0 L657.8,496.2 L658.4,499.9 L659.1,510.6 L659.7,500.7 L660.3,492.0 L660.9,509.1 L661.6,507.5 L662.2,504.7 L662.8,520.4 L663.5,513.8 L664.1,519.0 L664.7,528.3 L665.3,531.2 M677.9,699.3 L678.5,707.9 L679.1,715.8 L679.7,709.9 L680.4,717.6 L681.0,719.0 L681.6,740.3 L682.2,729.0 L682.9,723.5 L683.5,740.6 L684.1,719.9 L684.7,729.7 L685.4,729.8 L686.0,718.2 L686.6,715.0 L687.2,712.5 M699.8,526.1 L700.4,531.5 L701.0,510.7 L701.6,513.3 L702.3,492.7 L702.9,497.2 L703.5,502.5 L704.2,515.4 L704.8,497.3 L705.4,496.4 L706.0,487.6 L706.7,510.3 L707.3,511.6 L707.9,520.2 L708.5,505.3 L709.2,512.8 L709.8,516.1 M722.3,702.1 L722.9,700.7 L723.6,714.2 L724.2,713.6 L724.8,736.4 L725.4,727.5 L726.1,726.4 L726.7,718.5 L727.3,737.0 L727.9,732.7 L728.6,743.5 L729.2,718.9 L729.8,727.8 L730.4,729.0 L731.1,716.3 L731.7,705.3 L732.3,697.4 M744.9,529.7 L745.5,513.2 L746.1,512.1 L746.7,506.3 L747.4,515.6 L748.0,506.9 L748.6,503.4 L749.2,511.6 L749.9,493.1 L750.5,491.3 L751.1,512.4 L751.7,495.3 L752.4,506.9 L753.0,498.0 L753.6,511.7 L754.2,513.8 L754.9,517.0 M767.4,702.3 L768.0,717.4 L768.6,707.6 L769.3,713.0 L769.9,708.2 L770.5,726.2 L771.1,720.2 L771.8,745.0 L772.4,731.3 L773.0,728.7 L773.7,741.7 L774.3,720.3 L774.9,722.3 L775.5,707.4 L776.2,708.5 L776.8,704.9 L777.4,709.8 M789.9,526.1 L790.6,510.3 L791.2,519.2 L791.8,510.4 L792.4,520.2 L793.1,508.9 L793.7,495.1 L794.3,508.7 L794.9,505.0 L795.6,508.1 L796.2,488.8 L796.8,505.2 L797.4,503.9 L798.1,520.7 L798.7,513.4 L799.3,515.9 L800.0,518.0 M812.5,708.2 L813.1,717.2 L813.7,721.2 L814.4,721.7 L815.0,709.5 L815.6,728.0 L816.2,723.4 L816.9,740.9 L817.5,727.8 L818.1,724.0 L818.7,738.8 L819.4,722.6 L820.0,715.9 L820.6,710.1 L821.2,713.6 L821.9,705.1 L822.5,710.2 M835.0,524.5 L835.6,509.4 L836.3,517.1 L836.9,513.5 L837.5,515.4 L838.1,509.2 L838.8,493.6 L839.4,484.9 L840.0,504.4 L840.6,497.7 L841.3,485.7 L841.9,507.5 L842.5,500.0 L843.2,523.4 L843.8,516.9 L844.4,516.8 L845.0,519.6 M857.6,710.5 L858.2,721.8 L858.8,720.0 L859.4,722.4 L860.1,738.4 L860.7,724.6 L861.3,738.0 L861.9,718.6 L862.6,722.5 L863.2,728.4 L863.8,711.4 L864.4,724.0 L865.1,713.8 L865.7,705.1 L866.3,718.1 L866.9,705.7 L867.6,706.7 M880.1,523.8 L880.7,509.8 L881.3,505.9 L882.0,508.6 L882.6,493.6 L883.2,496.8 L883.9,507.9 L884.5,515.4 L885.1,494.5 L885.7,500.1 L886.4,514.8 L887.0,510.5 L887.6,505.4 L888.2,503.6 L888.9,512.2 L889.5,524.2 M902.0,698.0 L902.6,710.2 L903.3,722.0 L903.9,715.3 L904.5,726.6 L905.1,738.3 L905.8,736.4 L906.4,733.8 L907.0,744.4 L907.6,737.5 L908.3,728.3 L908.9,741.8 L909.5,717.5 L910.2,726.3 L910.8,727.7 L911.4,713.0 L912.0,705.7 M924.6,531.6 L925.2,520.6 L925.8,504.3 L926.4,511.3 L927.1,501.4 L927.7,512.6 L928.3,506.0 L928.9,496.3 L929.6,513.5 L930.2,498.9 L930.8,495.0 L931.4,490.8 L932.1,510.6 L932.7,510.5 L933.3,503.3 L933.9,522.7 L934.6,521.8 M947.1,704.4 L947.7,713.2 L948.3,723.8 L949.0,711.5 L949.6,720.1 L950.2,716.5 L950.8,727.2 L951.5,724.2 L952.1,742.3 L952.7,734.1 L953.4,735.9 L954.0,717.1 L954.6,721.5 L955.2,725.5 L955.9,706.9 L956.5,713.6 L957.1,701.4 M969.6,529.6 L970.3,518.5 L970.9,523.4 L971.5,511.5 L972.1,505.4 L972.8,486.9 L973.4,508.5 L974.0,502.6 L974.6,510.4 L975.3,505.4 L975.9,492.6 L976.5,516.7 L977.1,513.3 L977.8,509.5 L978.4,522.7 L979.0,522.9 L979.7,526.8 M992.2,707.6 L992.8,704.2 L993.4,726.9 L994.1,713.2 L994.7,724.1 L995.3,740.4 L995.9,726.6 L996.6,736.2 L997.2,745.7 L997.8,736.3 L998.4,721.0 L999.1,739.6 L999.7,714.9 L1000.3,722.7 L1000.9,722.3 L1001.6,705.7 L1002.2,707.6 M1014.7,529.3 L1015.3,524.0 L1016.0,521.2 L1016.6,510.5 L1017.2,505.7 L1017.8,515.9 L1018.5,509.0 L1019.1,501.2 L1019.7,487.3 L1020.3,498.0 L1021.0,501.4 L1021.6,517.9 L1022.2,500.5 L1022.9,506.8 L1023.5,523.5 L1024.1,521.9 L1024.7,526.4 M1037.3,709.4 L1037.9,704.5 L1038.5,706.2 L1039.1,727.0 L1039.8,717.0 L1040.4,711.1 L1041.0,735.4 L1041.6,735.4 L1042.3,746.0 L1042.9,731.6 L1043.5,731.0 L1044.1,712.3 L1044.8,718.6 L1045.4,716.5 L1046.0,700.9 L1046.6,704.3 L1047.3,699.8 M1059.8,523.8 L1060.4,518.6 L1061.0,503.1 L1061.7,501.3 L1062.3,506.7 L1062.9,486.1 L1063.6,500.6 L1064.2,494.5 L1064.8,515.1 L1065.4,498.6 L1066.1,499.9 L1066.7,493.6 L1067.3,503.0 L1067.9,505.2 L1068.6,506.0 L1069.2,526.0 L1069.8,525.2 M1082.3,706.9 L1083.0,713.9 L1083.6,725.9 L1084.2,720.1 L1084.8,727.5 L1085.5,741.7 L1086.1,723.9 L1086.7,731.9 L1087.3,716.0 L1088.0,729.8 L1088.6,729.1 L1089.2,710.9 L1089.9,721.7 L1090.5,710.0 L1091.1,701.0 L1091.7,710.5 M1104.3,521.3 L1104.9,517.3 L1105.5,511.5 L1106.1,498.6 L1106.8,508.4 L1107.4,498.5 L1108.0,515.1 L1108.6,500.9 L1109.3,505.7 L1109.9,508.9 L1110.5,494.3 L1111.1,508.2 L1111.8,495.6 L1112.4,511.8 L1113.0,515.0 L1113.6,509.7 L1114.3,523.7 M1126.8,707.9 L1127.4,710.2 L1128.0,707.0 L1128.7,729.5 L1129.3,725.1 L1129.9,719.9 L1130.5,712.2 L1131.2,725.5 L1131.8,737.0 L1132.4,717.3 L1133.1,735.0 L1133.7,720.6 L1134.3,737.8 L1134.9,725.3 L1135.6,720.7 L1136.2,720.1 L1136.8,707.1 M1149.3,519.2 L1150.0,526.3 L1150.6,511.4 L1151.2,524.2 L1151.8,513.9 L1152.5,503.8 L1153.1,491.6 L1153.7,492.0 L1154.3,506.8 L1155.0,512.6 L1155.6,497.3 L1156.2,504.5 L1156.8,490.9 L1157.5,508.3 L1158.1,513.0 L1158.7,527.9 L1159.4,521.7 M1171.9,711.2 L1172.5,707.7 L1173.1,713.5 L1173.8,730.5 L1174.4,730.1 L1175.0,727.2 L1175.6,712.9 L1176.3,725.2 L1176.9,724.9 L1177.5,719.7 L1178.1,722.8 L1178.8,732.2 L1179.4,713.4 L1180.0,719.8 L1180.6,712.9 L1181.3,703.1 L1181.9,704.5 M1194.4,518.6 L1195.0,514.4 L1195.7,516.0 L1196.3,495.6 L1196.9,498.6 L1197.5,507.4 L1198.2,512.6 L1198.8,496.2 L1199.4,506.8 L1200.1,485.2 L1200.7,492.9 L1201.3,495.8 L1201.9,517.2 L1202.6,511.1 L1203.2,509.5 L1203.8,511.6 L1204.4,530.3 M1217.0,710.2 L1217.6,711.5 L1218.2,720.0 L1218.8,711.0 L1219.5,727.9 L1220.1,720.6 L1220.7,738.0 L1221.3,733.2 L1222.0,732.4 L1222.6,745.6 L1223.2,730.4 L1223.8,730.1 L1224.5,733.2 L1225.1,717.2 L1225.7,714.2 L1226.3,715.3 L1227.0,701.3 M1239.5,516.0 L1240.1,523.7 L1240.7,508.1 L1241.4,496.3 L1242.0,497.2 L1242.6,495.5 L1243.3,515.2" stroke="#4f9e86" stroke-width="0.9" fill="none" opacity="0.55"/><rect x="1131" y="892" width="133" height="70" fill="#fdf6e3" stroke="#5c7580" stroke-width="2"/><circle cx="1173" cy="914" r="5.5" fill="#dc322f"/><line x1="1142" y1="940" x2="1205" y2="940" stroke="#9a9a10" stroke-width="2.2"/></svg>
<svg class="a" style="left:0;top:0" width="2050" height="1294"><g font-family='"Liberation Sans",sans-serif' font-size="21" fill="#5c7580"><text x="614.0" y="1044" text-anchor="middle">0</text><text x="726.4" y="1044" text-anchor="middle">30</text><text x="838.7" y="1044" text-anchor="middle">60</text><text x="951.1" y="1044" text-anchor="middle">90</text><text x="1063.5" y="1044" text-anchor="middle">120</text><text x="1175.8" y="1044" text-anchor="middle">150</text><text x="1288.2" y="1044" text-anchor="middle">180</text><text x="604" y="1023.2" text-anchor="end">0</text><text x="604" y="798.3" text-anchor="end">6</text><text x="604" y="573.5" text-anchor="end">12</text><text x="604" y="348.6" text-anchor="end">18</text><text x="725.2" y="315.7" font-size="35" textLength="452" lengthAdjust="spacingAndGlyphs" stroke="#5e7884" stroke-width="0.4">El Niño-Southern Oscillation</text><text x="1210.5" y="924.7" font-size="21">data</text><text x="1210.5" y="950" font-size="21">fit</text></g><g font-family='"Liberation Mono",monospace' font-size="28" fill="#5b6f78"><text x="950.6" y="1086.8" text-anchor="middle">Month</text><text transform="translate(558.8 672.4) rotate(-90)" x="0" y="0" text-anchor="middle">Atmospheric Pressure</text></g></svg>
<div class="a" style="left:1438px;top:159px;width:547px;height:1035px;background:none;border:1px solid #41464b;box-sizing:border-box;border-radius:3px;"></div>
<div class="t" style="left:1444.0px;top:166.5px;font-size:13.6px;color:#fcfcfc;font-weight:normal;font-family:'Liberation Sans',sans-serif;">Fit</div>
<svg class="a" style="left:1941px;top:167px;" width="10" height="10" viewBox="0 0 10 10"><path d="M5 0.7 L9.3 5 L5 9.3 L0.7 5 Z" fill="none" stroke="#cfd0d1" stroke-width="1"/></svg>
<svg class="a" style="left:1961px;top:164px;" width="16" height="16" viewBox="0 0 16 16"><circle cx="8" cy="8" r="8" fill="#a0a2a5"/><path d="M4 4 L12 12 M12 4 L4 12" stroke="#2a2e32" stroke-width="1"/></svg>
<div class="a" style="left:1440px;top:189px;width:542px;height:1003px;background:#1b1e20;border:1px solid #3daee9;box-sizing:border-box;border-radius:3px;"></div>
<div class="a" style="left:1448px;top:197px;width:400px;height:29px;background:#1e2124;border-radius:0px;"></div>
<div class="a" style="left:1448px;top:197px;width:80px;height:30px;background:#2a2e32;border:1px solid #3f4448;box-sizing:border-box;border-radius:0px;border-bottom:none;border-radius:3px 3px 0 0;"></div>
<div class="a" style="left:1448px;top:197px;width:80px;height:3px;background:#3daee9;border-radius:0px;border-radius:3px 3px 0 0;"></div>
<div class="a" style="left:1608px;top:199px;width:1px;height:27px;background:#2a2d31;border-radius:0px;"></div>
<div class="a" style="left:1688px;top:199px;width:1px;height:27px;background:#2a2d31;border-radius:0px;"></div>
<div class="a" style="left:1768px;top:199px;width:1px;height:27px;background:#2a2d31;border-radius:0px;"></div>
<div class="t" style="left:1464.2px;top:205.0px;font-size:13.6px;color:#fcfcfc;font-weight:normal;font-family:'Liberation Sans',sans-serif;">General</div>
<div class="t" style="left:1555.5px;top:205.0px;font-size:13.6px;color:#fcfcfc;font-weight:normal;font-family:'Liberation Sans',sans-serif;">Line</div>
<div class="t" style="left:1627.0px;top:205.0px;font-size:13.6px;color:#fcfcfc;font-weight:normal;font-family:'Liberation Sans',sans-serif;">Symbol</div>
<div class="t" style="left:1708.3px;top:205.0px;font-size:13.6px;color:#fcfcfc;font-weight:normal;font-family:'Liberation Sans',sans-serif;">Values</div>
<div class="t" style="left:1790.2px;top:205.0px;font-size:13.6px;color:#fcfcfc;font-weight:normal;font-family:'Liberation Sans',sans-serif;">Filling</div>
<div class="a" style="left:1448px;top:226px;width:526px;height:898px;background:#2a2e32;border:1px solid #3f4448;box-sizing:border-box;border-radius:3px;"></div>
<div class="a" style="left:1449px;top:226px;width:78px;height:2px;background:#2a2e32;border-radius:0px;"></div>
<div class="t" style="left:1453.5px;top:240.0px;font-size:13.6px;color:#fcfcfc;font-weight:normal;font-family:'Liberation Sans',sans-serif;">Name:</div>
<div class="a" style="left:1581px;top:232px;width:387px;height:30px;background:#1b1e20;border:1px solid #4a4f54;box-sizing:border-box;border-radius:3px;"></div>
<div class="t" style="left:1588.0px;top:240.0px;font-size:13.6px;color:#fcfcfc;font-weight:normal;font-family:'Liberation Sans',sans-serif;">fit</div>
<div class="t" style="left:1453.5px;top:276.0px;font-size:13.6px;color:#fcfcfc;font-weight:normal;font-family:'Liberation Sans',sans-serif;">Comment:</div>
<div class="a" style="left:1581px;top:266px;width:387px;height:34px;background:#1b1e20;border:1px solid #4a4f54;box-sizing:border-box;border-radius:3px;"></div>
<svg class="a" style="left:1488px;top:325px;" width="7" height="11" viewBox="0 0 7 11"><path d="M0.8 0.5 L5.8 5.5 L0.8 10.5" stroke="#fcfcfc" fill="none" stroke-width="1.1"/></svg>
<div class="t" style="left:1503.7px;top:324.6px;font-size:13px;color:#fcfcfc;font-weight:bold;font-family:'Liberation Sans',sans-serif;">Data:</div>
<svg class="a" style="left:1478px;top:370px;" width="7" height="11" viewBox="0 0 7 11"><path d="M0.8 0.5 L5.8 5.5 L0.8 10.5" stroke="#fcfcfc" fill="none" stroke-width="1.1"/></svg>
<div class="t" style="left:1493.3px;top:369.6px;font-size:13px;color:#fcfcfc;font-weight:bold;font-family:'Liberation Sans',sans-serif;">Weights:</div>
<div class="a" style="left:1454px;top:407px;width:111px;height:32px;background:#3b4045;border:1px solid #50555a;box-sizing:border-box;border-radius:3px;"></div>
<svg class="a" style="left:1492px;top:420px;" width="11" height="7" viewBox="0 0 11 7"><path d="M0.5 0.8 L5.5 5.8 L10.5 0.8" stroke="#fcfcfc" fill="none" stroke-width="1.1"/></svg>
<div class="t" style="left:1510.4px;top:417.0px;font-size:13px;color:#fcfcfc;font-weight:bold;font-family:'Liberation Sans',sans-serif;">Fit:</div>
<div class="a" style="left:1874px;top:407px;width:94px;height:32px;background:#31363b;border:1px solid #565b60;box-sizing:border-box;border-radius:3px;"></div>
<svg class="a" style="left:1883px;top:417px;" width="13" height="13" viewBox="0 0 13 13"><path d="M0.5 3 H12.5 M0.5 10 H12.5" stroke="#fcfcfc" stroke-width="1.1"/><circle cx="9" cy="3" r="1.8" fill="#fcfcfc"/><circle cx="3.5" cy="10" r="1.8" fill="#2e3236" stroke="#fcfcfc"/></svg>
<div class="t" style="left:1901.3px;top:416.5px;font-size:13.6px;color:#fcfcfc;font-weight:normal;font-family:'Liberation Sans',sans-serif;">Advanced</div>
<div class="t" style="left:1453.4px;top:451.3px;font-size:13.6px;color:#fcfcfc;font-weight:normal;font-family:'Liberation Sans',sans-serif;">Category:</div>
<div class="a" style="left:1581px;top:443px;width:387px;height:30px;background:#31363b;border:1px solid #4a4f54;box-sizing:border-box;border-radius:3px;"></div>
<div class="t" style="left:1587.3px;top:451.3px;font-size:13.6px;color:#fcfcfc;font-weight:normal;font-family:'Liberation Sans',sans-serif;">Custom</div>
<svg class="a" style="left:1952px;top:455px;" width="11" height="7" viewBox="0 0 11 7"><path d="M0.5 0.8 L5.5 5.8 L10.5 0.8" stroke="#fcfcfc" fill="none" stroke-width="1.1"/></svg>
<div class="t" style="left:1453.4px;top:478.0px;font-size:13.6px;color:#fcfcfc;font-weight:normal;font-family:'Liberation Sans',sans-serif;">f(x) =</div>
<div class="a" style="left:1581px;top:477px;width:355px;height:62px;background:#1b1e20;border:1px solid #4a4f54;box-sizing:border-box;border-radius:3px;"></div>
<div class="a" style="left:1915px;top:478px;width:1px;height:60px;background:#2a2d31;border-radius:0px;"></div>
<div class="a" style="left:1920px;top:483px;width:10px;height:48px;background:#4c5054;border:1px solid #5e6266;box-sizing:border-box;border-radius:5px;"></div>
<div class="a" style="left:1938px;top:477px;width:30px;height:29px;background:#31363b;border:1px solid #565b60;box-sizing:border-box;border-radius:3px;"></div>
<div class="t" style="left:1946.0px;top:487.8px;font-size:8.5px;color:#e8e8e8;font-weight:bold;font-family:'Liberation Sans',sans-serif;">Aa</div>
<div class="a" style="left:1938px;top:509px;width:30px;height:30px;background:#31363b;border:1px solid #565b60;box-sizing:border-box;border-radius:3px;"></div>
<div class="t" style="left:1945.0px;top:512.4px;font-size:22px;color:#fcfcfc;font-weight:normal;font-family:'Liberation Serif',serif;font-style:italic;">π</div>
<div class="t" style="left:1586.2px;top:483.3px;font-size:13.8px;color:#fcfcfc;font-weight:normal;font-family:'Liberation Sans',sans-serif;"><span style="color:#92d06c">b1</span><span style="color:#fcfcfc"> + </span><span style="color:#92d06c">b2</span><span style="color:#fcfcfc">*</span><span style="color:#f4968a">cos</span><span style="color:#fcfcfc">( 2*</span><span style="color:#f4968a">pi</span><span style="color:#fcfcfc">*</span><span style="color:#92d06c">x</span><span style="color:#fcfcfc">/12 ) + </span><span style="color:#92d06c">b3</span><span style="color:#fcfcfc">*</span><span style="color:#f4968a">sin</span><span style="color:#fcfcfc">( 2*</span><span style="color:#f4968a">pi</span><span style="color:#fcfcfc">*</span><span style="color:#92d06c">x</span><span style="color:#fcfcfc">/12 ) +</span></div>
<div class="t" style="left:1586.2px;top:501.7px;font-size:13.8px;color:#fcfcfc;font-weight:normal;font-family:'Liberation Sans',sans-serif;"><span style="color:#92d06c">b5</span><span style="color:#fcfcfc">*</span><span style="color:#f4968a">cos</span><span style="color:#fcfcfc">( 2*</span><span style="color:#f4968a">pi</span><span style="color:#fcfcfc">*</span><span style="color:#92d06c">x</span><span style="color:#fcfcfc">/</span><span style="color:#92d06c">b4</span><span style="color:#fcfcfc"> ) + </span><span style="color:#92d06c">b6</span><span style="color:#fcfcfc">*</span><span style="color:#f4968a">sin</span><span style="color:#fcfcfc">( 2*</span><span style="color:#f4968a">pi</span><span style="color:#fcfcfc">*</span><span style="color:#92d06c">x</span><span style="color:#fcfcfc">/</span><span style="color:#92d06c">b4</span><span style="color:#fcfcfc"> ) + </span><span style="color:#92d06c">b8</span><span style="color:#fcfcfc">*</span><span style="color:#f4968a">cos</span><span style="color:#fcfcfc">(</span></div>
<div class="t" style="left:1586.2px;top:520.1px;font-size:13.8px;color:#fcfcfc;font-weight:normal;font-family:'Liberation Sans',sans-serif;"><span style="color:#fcfcfc">2*</span><span style="color:#f4968a">pi</span><span style="color:#fcfcfc">*</span><span style="color:#92d06c">x</span><span style="color:#fcfcfc">/</span><span style="color:#92d06c">b7</span><span style="color:#fcfcfc"> ) + </span><span style="color:#92d06c">b9</span><span style="color:#fcfcfc">*</span><span style="color:#f4968a">sin</span><span style="color:#fcfcfc">( 2*</span><span style="color:#f4968a">pi</span><span style="color:#fcfcfc">*</span><span style="color:#92d06c">x</span><span style="color:#fcfcfc">/</span><span style="color:#92d06c">b7</span><span style="color:#fcfcfc"> )</span></div>
<div class="a" style="left:1454px;top:557px;width:111px;height:28px;background:#3b4045;border:1px solid #50555a;box-sizing:border-box;border-radius:3px;"></div>
<svg class="a" style="left:1464px;top:567px;" width="11" height="7" viewBox="0 0 11 7"><path d="M0.5 0.8 L5.5 5.8 L10.5 0.8" stroke="#fcfcfc" fill="none" stroke-width="1.1"/></svg>
<div class="t" style="left:1482.0px;top:564.5px;font-size:13px;color:#fcfcfc;font-weight:bold;font-family:'Liberation Sans',sans-serif;">Parameters:</div>
<div class="a" style="left:1581px;top:556px;width:387px;height:178px;background:#1b1e20;border:1px solid #3daee9;box-sizing:border-box;border-radius:3px;"></div>
<div class="a" style="left:1582px;top:557px;width:364px;height:29px;background:#31363b;border-radius:0px;"></div>
<div class="a" style="left:1603px;top:557px;width:48px;height:29px;background:#2f4a5a;border-radius:0px;"></div>
<div class="a" style="left:1582px;top:586px;width:364px;height:1px;background:#3f4448;border-radius:0px;"></div>
<div class="a" style="left:1602px;top:557px;width:1px;height:29px;background:#4a4f54;border-radius:0px;"></div>
<div class="a" style="left:1651px;top:557px;width:1px;height:29px;background:#4a4f54;border-radius:0px;"></div>
<div class="a" style="left:1729px;top:557px;width:1px;height:29px;background:#4a4f54;border-radius:0px;"></div>
<div class="a" style="left:1778px;top:557px;width:1px;height:29px;background:#4a4f54;border-radius:0px;"></div>
<div class="a" style="left:1858px;top:557px;width:1px;height:29px;background:#4a4f54;border-radius:0px;"></div>
<div class="a" style="left:1946px;top:557px;width:1px;height:29px;background:#4a4f54;border-radius:0px;"></div>
<div class="t" style="left:1609.6px;top:564.9px;font-size:13.6px;color:#fcfcfc;font-weight:bold;font-family:'Liberation Sans',sans-serif;">Name</div>
<div class="t" style="left:1658.5px;top:564.9px;font-size:13.6px;color:#fcfcfc;font-weight:normal;font-family:'Liberation Sans',sans-serif;">Start value</div>
<div class="t" style="left:1738.9px;top:564.9px;font-size:13.6px;color:#fcfcfc;font-weight:normal;font-family:'Liberation Sans',sans-serif;">Fixed</div>
<div class="t" style="left:1785.0px;top:564.9px;font-size:13.6px;color:#fcfcfc;font-weight:normal;font-family:'Liberation Sans',sans-serif;">Lower limit</div>
<div class="t" style="left:1868.7px;top:564.9px;font-size:13.6px;color:#fcfcfc;font-weight:normal;font-family:'Liberation Sans',sans-serif;">Upper limit</div>
<div class="a" style="left:1582px;top:587px;width:20px;height:30px;background:#2f4a5a;border-radius:0px;"></div>
<div class="a" style="left:1603px;top:587px;width:48px;height:30px;background:#1e4a62;border-radius:0px;"></div>
<div class="a" style="left:1582px;top:616px;width:364px;height:1px;background:#2a2d31;border-radius:0px;"></div>
<div class="t" style="left:1587.5px;top:595.0px;font-size:13.6px;color:#fcfcfc;font-weight:normal;font-family:'Liberation Sans',sans-serif;">1</div>
<div class="t" style="left:1606.4px;top:594.5px;font-size:13.6px;color:#fcfcfc;font-weight:normal;font-family:'Liberation Sans',sans-serif;">b1</div>
<div class="t" style="left:1654.9px;top:595.0px;font-size:13.6px;color:#fcfcfc;font-weight:normal;font-family:'Liberation Sans',sans-serif;">10.6415</div>
<div class="a" style="left:1742px;top:593px;width:16px;height:16px;background:none;border:1px solid #5c6165;box-sizing:border-box;border-radius:2px;"></div>
<div class="a" style="left:1582px;top:617px;width:20px;height:30px;background:#31363b;border-radius:0px;"></div>
<div class="a" style="left:1603px;top:617px;width:48px;height:30px;background:#232629;border-radius:0px;"></div>
<div class="a" style="left:1582px;top:646px;width:364px;height:1px;background:#2a2d31;border-radius:0px;"></div>
<div class="t" style="left:1587.5px;top:625.0px;font-size:13.6px;color:#fcfcfc;font-weight:normal;font-family:'Liberation Sans',sans-serif;">2</div>
<div class="t" style="left:1606.4px;top:624.5px;font-size:13.6px;color:#fcfcfc;font-weight:normal;font-family:'Liberation Sans',sans-serif;">b2</div>
<div class="t" style="left:1654.9px;top:625.0px;font-size:13.6px;color:#fcfcfc;font-weight:normal;font-family:'Liberation Sans',sans-serif;">3.05277</div>
<div class="a" style="left:1742px;top:623px;width:16px;height:16px;background:none;border:1px solid #5c6165;box-sizing:border-box;border-radius:2px;"></div>
<div class="a" style="left:1582px;top:647px;width:20px;height:30px;background:#31363b;border-radius:0px;"></div>
<div class="a" style="left:1603px;top:647px;width:48px;height:30px;background:#232629;border-radius:0px;"></div>
<div class="a" style="left:1582px;top:676px;width:364px;height:1px;background:#2a2d31;border-radius:0px;"></div>
<div class="t" style="left:1587.5px;top:655.0px;font-size:13.6px;color:#fcfcfc;font-weight:normal;font-family:'Liberation Sans',sans-serif;">3</div>
<div class="t" style="left:1606.4px;top:654.5px;font-size:13.6px;color:#fcfcfc;font-weight:normal;font-family:'Liberation Sans',sans-serif;">b3</div>
<div class="t" style="left:1654.9px;top:655.0px;font-size:13.6px;color:#fcfcfc;font-weight:normal;font-family:'Liberation Sans',sans-serif;">0.479257</div>
<div class="a" style="left:1742px;top:653px;width:16px;height:16px;background:none;border:1px solid #5c6165;box-sizing:border-box;border-radius:2px;"></div>
<div class="a" style="left:1582px;top:677px;width:20px;height:30px;background:#31363b;border-radius:0px;"></div>
<div class="a" style="left:1603px;top:677px;width:48px;height:30px;background:#232629;border-radius:0px;"></div>
<div class="a" style="left:1582px;top:706px;width:364px;height:1px;background:#2a2d31;border-radius:0px;"></div>
<div class="t" style="left:1587.5px;top:685.0px;font-size:13.6px;color:#fcfcfc;font-weight:normal;font-family:'Liberation Sans',sans-serif;">4</div>
<div class="t" style="left:1606.4px;top:684.5px;font-size:13.6px;color:#fcfcfc;font-weight:normal;font-family:'Liberation Sans',sans-serif;">b5</div>
<div class="t" style="left:1654.9px;top:685.0px;font-size:13.6px;color:#fcfcfc;font-weight:normal;font-family:'Liberation Sans',sans-serif;">-0.0808158</div>
<div class="a" style="left:1742px;top:683px;width:16px;height:16px;background:none;border:1px solid #5c6165;box-sizing:border-box;border-radius:2px;"></div>
<div class="a" style="left:1582px;top:707px;width:20px;height:26px;background:#31363b;border-radius:0px;"></div>
<div class="a" style="left:1603px;top:707px;width:48px;height:26px;background:#232629;border-radius:0px;"></div>
<div class="a" style="left:1582px;top:736px;width:364px;height:1px;background:#2a2d31;border-radius:0px;"></div>
<div class="t" style="left:1587.5px;top:715.0px;font-size:13.6px;color:#fcfcfc;font-weight:normal;font-family:'Liberation Sans',sans-serif;">5</div>
<div class="t" style="left:1606.4px;top:714.5px;font-size:13.6px;color:#fcfcfc;font-weight:normal;font-family:'Liberation Sans',sans-serif;">b4</div>
<div class="t" style="left:1654.9px;top:715.0px;font-size:13.6px;color:#fcfcfc;font-weight:normal;font-family:'Liberation Sans',sans-serif;">-0.699536</div>
<div class="a" style="left:1742px;top:713px;width:16px;height:16px;background:none;border:1px solid #5c6165;box-sizing:border-box;border-radius:2px;"></div>
<div class="a" style="left:1602px;top:587px;width:1px;height:146px;background:#2a2d31;border-radius:0px;"></div>
<div class="a" style="left:1651px;top:587px;width:1px;height:146px;background:#2a2d31;border-radius:0px;"></div>
<div class="a" style="left:1729px;top:587px;width:1px;height:146px;background:#2a2d31;border-radius:0px;"></div>
<div class="a" style="left:1778px;top:587px;width:1px;height:146px;background:#2a2d31;border-radius:0px;"></div>
<div class="a" style="left:1858px;top:587px;width:1px;height:146px;background:#2a2d31;border-radius:0px;"></div>
<div class="a" style="left:1946px;top:557px;width:1px;height:176px;background:#2a2d31;border-radius:0px;"></div>
<div class="a" style="left:1952px;top:562px;width:10px;height:73px;background:#4c5054;border:1px solid #5e6266;box-sizing:border-box;border-radius:5px;"></div>
<div class="a" style="left:1886px;top:738px;width:82px;height:32px;background:#31363b;border:1px solid #565b60;box-sizing:border-box;border-radius:3px;"></div>
<svg class="a" style="left:1910px;top:747px;" width="14" height="14" viewBox="0 0 14 14"><circle cx="7" cy="7" r="4.7" fill="none" stroke="#fcfcfc" stroke-width="1.4"/><circle cx="12.60" cy="7.00" r="1.25" fill="#fcfcfc"/><circle cx="10.96" cy="10.96" r="1.25" fill="#fcfcfc"/><circle cx="7.00" cy="12.60" r="1.25" fill="#fcfcfc"/><circle cx="3.04" cy="10.96" r="1.25" fill="#fcfcfc"/><circle cx="1.40" cy="7.00" r="1.25" fill="#fcfcfc"/><circle cx="3.04" cy="3.04" r="1.25" fill="#fcfcfc"/><circle cx="7.00" cy="1.40" r="1.25" fill="#fcfcfc"/><circle cx="10.96" cy="3.04" r="1.25" fill="#fcfcfc"/><path d="M5.9 5 L9.1 7 L5.9 9 Z" fill="#fcfcfc"/></svg>
<div class="t" style="left:1930.0px;top:747.8px;font-size:13.6px;color:#fcfcfc;font-weight:normal;font-family:'Liberation Sans',sans-serif;">Fit</div>
<div class="a" style="left:1454px;top:779px;width:111px;height:28px;background:#3b4045;border:1px solid #50555a;box-sizing:border-box;border-radius:3px;"></div>
<svg class="a" style="left:1477px;top:790px;" width="11" height="7" viewBox="0 0 11 7"><path d="M0.5 0.8 L5.5 5.8 L10.5 0.8" stroke="#fcfcfc" fill="none" stroke-width="1.1"/></svg>
<div class="t" style="left:1495.2px;top:787.5px;font-size:13px;color:#fcfcfc;font-weight:bold;font-family:'Liberation Sans',sans-serif;">Results:</div>
<div class="a" style="left:1581px;top:780px;width:276px;height:29px;background:#1e2124;border-radius:0px;border-radius:3px 3px 0 0;"></div>
<div class="a" style="left:1581px;top:809px;width:387px;height:233px;background:#2a2e32;border:1px solid #3f4448;box-sizing:border-box;border-radius:3px;"></div>
<div class="a" style="left:1668px;top:780px;width:108px;height:30px;background:#2a2e32;border:1px solid #3f4448;box-sizing:border-box;border-radius:0px;border-bottom:none;border-radius:3px 3px 0 0;"></div>
<div class="a" style="left:1668px;top:780px;width:108px;height:3px;background:#3daee9;border-radius:0px;border-radius:3px 3px 0 0;"></div>
<div class="t" style="left:1589.3px;top:786.5px;font-size:13.6px;color:#fcfcfc;font-weight:normal;font-family:'Liberation Sans',sans-serif;">Parameters</div>
<div class="t" style="left:1676.0px;top:786.5px;font-size:13.6px;color:#fcfcfc;font-weight:normal;font-family:'Liberation Sans',sans-serif;">Goodness of fit</div>
<div class="t" style="left:1806.0px;top:786.5px;font-size:13.6px;color:#fcfcfc;font-weight:normal;font-family:'Liberation Sans',sans-serif;">Log</div>
<div class="a" style="left:1592px;top:818px;width:366px;height:214px;background:#1b1e20;border:1px solid #3f4448;box-sizing:border-box;border-radius:3px;"></div>
<div class="t" style="left:1595.4px;top:827.0px;font-size:13.6px;color:#fcfcfc;font-weight:normal;font-family:'Liberation Sans',sans-serif;">Sum of squared residuals (χ<sup>2</sup>)</div>
<div class="t" style="left:1851.5px;top:827.0px;font-size:13.6px;color:#fcfcfc;font-weight:normal;font-family:'Liberation Sans',sans-serif;">1118.18</div>
<div class="a" style="left:1593px;top:849px;width:343px;height:30px;background:#232629;border-radius:0px;"></div>
<div class="t" style="left:1595.4px;top:857.0px;font-size:13.6px;color:#fcfcfc;font-weight:normal;font-family:'Liberation Sans',sans-serif;">Residual mean square (χ<sup>2</sup>/dof)</div>
<div class="t" style="left:1851.5px;top:857.0px;font-size:13.6px;color:#fcfcfc;font-weight:normal;font-family:'Liberation Sans',sans-serif;">7.03255</div>
<div class="t" style="left:1595.4px;top:887.3px;font-size:13.2px;color:#fcfcfc;font-weight:normal;font-family:'Liberation Sans',sans-serif;">Root mean square deviation (RMSD, SD)</div>
<div class="t" style="left:1851.5px;top:887.0px;font-size:13.6px;color:#fcfcfc;font-weight:normal;font-family:'Liberation Sans',sans-serif;">2.6519</div>
<div class="a" style="left:1593px;top:909px;width:343px;height:30px;background:#232629;border-radius:0px;"></div>
<div class="t" style="left:1595.4px;top:917.0px;font-size:13.6px;color:#fcfcfc;font-weight:normal;font-family:'Liberation Sans',sans-serif;">Coefficient of determination (R<sup>2</sup>)</div>
<div class="t" style="left:1851.5px;top:917.0px;font-size:13.6px;color:#fcfcfc;font-weight:normal;font-family:'Liberation Sans',sans-serif;">0.430382</div>
<div class="t" style="left:1595.4px;top:947.0px;font-size:13.6px;color:#fcfcfc;font-weight:normal;font-family:'Liberation Sans',sans-serif;">Adj. coefficient of determination (R̄<sup>2</sup>)</div>
<div class="t" style="left:1851.5px;top:947.0px;font-size:13.6px;color:#fcfcfc;font-weight:normal;font-family:'Liberation Sans',sans-serif;">0.397936</div>
<div class="a" style="left:1593px;top:969px;width:343px;height:30px;background:#232629;border-radius:0px;"></div>
<div class="t" style="left:1595.4px;top:977.0px;font-size:13.6px;color:#fcfcfc;font-weight:normal;font-family:'Liberation Sans',sans-serif;">χ<sup>2</sup>-test ( P &gt; χ<sup>2</sup>)</div>
<div class="t" style="left:1851.5px;top:977.0px;font-size:13.6px;color:#fcfcfc;font-weight:normal;font-family:'Liberation Sans',sans-serif;">0</div>
<div class="t" style="left:1595.4px;top:1007.0px;font-size:13.6px;color:#fcfcfc;font-weight:normal;font-family:'Liberation Sans',sans-serif;">F test</div>
<div class="t" style="left:1851.5px;top:1007.0px;font-size:13.6px;color:#fcfcfc;font-weight:normal;font-family:'Liberation Sans',sans-serif;">15</div>
<div class="a" style="left:1847px;top:819px;width:1px;height:212px;background:#2a2d31;border-radius:0px;"></div>
<div class="a" style="left:1936px;top:819px;width:1px;height:212px;background:#2a2d31;border-radius:0px;"></div>
<div class="a" style="left:1942px;top:824px;width:10px;height:128px;background:#4c5054;border:1px solid #5e6266;box-sizing:border-box;border-radius:5px;"></div>
<div class="a" style="left:1453px;top:1046px;width:516px;height:1px;background:#3f4448;border-radius:0px;"></div>
<div class="t" style="left:1453.0px;top:1059.5px;font-size:13.6px;color:#fcfcfc;font-weight:normal;font-family:'Liberation Sans',sans-serif;">Plot ranges:</div>
<div class="a" style="left:1583px;top:1051px;width:298px;height:30px;background:#2e3236;border:1px solid #3f4448;box-sizing:border-box;border-radius:3px;"></div>
<div class="t" style="left:1589.5px;top:1059.9px;font-size:13.1px;color:#6f7377;font-weight:normal;font-family:'Liberation Sans',sans-serif;">1 : x = 0 .. 180, y = 0 .. 18</div>
<svg class="a" style="left:1865px;top:1065px;" width="11" height="7" viewBox="0 0 11 7"><path d="M0.5 0.8 L5.5 5.8 L10.5 0.8" stroke="#7a7e82" fill="none" stroke-width="1.1"/></svg>
<div class="a" style="left:1455px;top:1100px;width:16px;height:16px;background:#1e3a4a;border:1px solid #3daee9;box-sizing:border-box;border-radius:2px;"></div>
<svg class="a" style="left:1457px;top:1103px;" width="12" height="10" viewBox="0 0 12 10"><path d="M1.5 5 L4.5 8 L10.5 1.5" stroke="#fcfcfc" stroke-width="1.6" fill="none"/></svg>
<div class="t" style="left:1477.0px;top:1101.5px;font-size:13.6px;color:#fcfcfc;font-weight:normal;font-family:'Liberation Sans',sans-serif;">Visible</div>
<div class="a" style="left:1862px;top:1137px;width:36px;height:36px;background:#25292c;border:1px solid #3a3e42;box-sizing:border-box;border-radius:3px;"></div>
<div class="a" style="left:1900px;top:1137px;width:36px;height:36px;background:#31363b;border:1px solid #565b60;box-sizing:border-box;border-radius:3px;"></div>
<div class="a" style="left:1938px;top:1137px;width:36px;height:36px;background:#31363b;border:1px solid #565b60;box-sizing:border-box;border-radius:3px;"></div>
<svg class="a" style="left:1872px;top:1147px;" width="16" height="16" viewBox="0 0 16 16"><path d="M2.5 14.5 V1.5 H9.5 L13.5 5.5 V8 M9.5 1.5 V5.5 H13.5 M2.5 14.5 H6" fill="none" stroke="#8a8e92" stroke-width="1.1"/><path d="M7.5 9.5 H10.5 L11 10.5 H14.5 V14.5 H7.5 Z" fill="none" stroke="#8a8e92" stroke-width="1.1"/></svg>
<svg class="a" style="left:1910px;top:1147px;" width="16" height="16" viewBox="0 0 16 16"><path d="M1.5 1.5 H12.5 L14.5 3.5 V14.5 H1.5 Z M4.5 1.5 V5.5 H11.5 V1.5 M3.5 14.5 V8.5 H12.5 V14.5" fill="none" stroke="#fcfcfc" stroke-width="1.3"/></svg>
<svg class="a" style="left:1948px;top:1147px;" width="16" height="16" viewBox="0 0 16 16"><path d="M9 14.5 H1.5 V1.5 H12.5 L14.5 3.5 V7 M4.5 1.5 V5.5 H11.5 V1.5 M3.5 14.5 V8.5 H8" fill="none" stroke="#fcfcfc" stroke-width="1.3"/><path d="M9 15 L15 9" stroke="#fcfcfc" stroke-width="2"/></svg>
<div class="t" style="left:1754.0px;top:1200.6px;font-size:13.5px;color:#fcfcfc;font-weight:normal;font-family:'Liberation Sans',sans-serif;">Memory used 168 MB, peak 3.362 MB</div>
</body></html>
